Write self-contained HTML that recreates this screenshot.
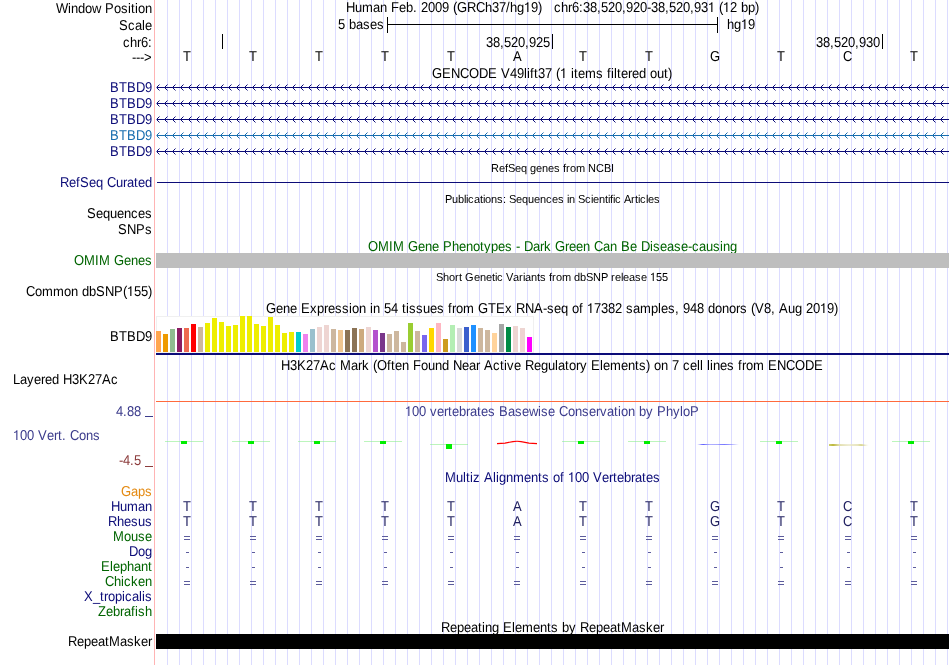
<!DOCTYPE html>
<html><head><meta charset="utf-8"><style>
html,body{margin:0;padding:0;background:#fff;width:950px;height:665px;overflow:hidden}
svg{display:block;will-change:transform}
text{font-family:"Liberation Sans", sans-serif;text-rendering:geometricPrecision;white-space:pre}
</style></head><body>
<svg width="950" height="665" viewBox="0 0 950 665" shape-rendering="crispEdges">
<rect x="167" y="0" width="1" height="665" fill="#dcdcff"/><rect x="179" y="0" width="1" height="665" fill="#dcdcff"/><rect x="191" y="0" width="1" height="665" fill="#dcdcff"/><rect x="203" y="0" width="1" height="665" fill="#dcdcff"/><rect x="215" y="0" width="1" height="665" fill="#dcdcff"/><rect x="227" y="0" width="1" height="665" fill="#dcdcff"/><rect x="239" y="0" width="1" height="665" fill="#dcdcff"/><rect x="251" y="0" width="1" height="665" fill="#dcdcff"/><rect x="263" y="0" width="1" height="665" fill="#dcdcff"/><rect x="275" y="0" width="1" height="665" fill="#dcdcff"/><rect x="287" y="0" width="1" height="665" fill="#dcdcff"/><rect x="299" y="0" width="1" height="665" fill="#dcdcff"/><rect x="311" y="0" width="1" height="665" fill="#dcdcff"/><rect x="323" y="0" width="1" height="665" fill="#dcdcff"/><rect x="335" y="0" width="1" height="665" fill="#dcdcff"/><rect x="347" y="0" width="1" height="665" fill="#dcdcff"/><rect x="359" y="0" width="1" height="665" fill="#dcdcff"/><rect x="371" y="0" width="1" height="665" fill="#dcdcff"/><rect x="383" y="0" width="1" height="665" fill="#dcdcff"/><rect x="395" y="0" width="1" height="665" fill="#dcdcff"/><rect x="407" y="0" width="1" height="665" fill="#dcdcff"/><rect x="419" y="0" width="1" height="665" fill="#dcdcff"/><rect x="431" y="0" width="1" height="665" fill="#dcdcff"/><rect x="443" y="0" width="1" height="665" fill="#dcdcff"/><rect x="455" y="0" width="1" height="665" fill="#dcdcff"/><rect x="467" y="0" width="1" height="665" fill="#dcdcff"/><rect x="479" y="0" width="1" height="665" fill="#dcdcff"/><rect x="491" y="0" width="1" height="665" fill="#dcdcff"/><rect x="503" y="0" width="1" height="665" fill="#dcdcff"/><rect x="515" y="0" width="1" height="665" fill="#dcdcff"/><rect x="527" y="0" width="1" height="665" fill="#dcdcff"/><rect x="539" y="0" width="1" height="665" fill="#dcdcff"/><rect x="551" y="0" width="1" height="665" fill="#dcdcff"/><rect x="563" y="0" width="1" height="665" fill="#dcdcff"/><rect x="575" y="0" width="1" height="665" fill="#dcdcff"/><rect x="587" y="0" width="1" height="665" fill="#dcdcff"/><rect x="599" y="0" width="1" height="665" fill="#dcdcff"/><rect x="611" y="0" width="1" height="665" fill="#dcdcff"/><rect x="623" y="0" width="1" height="665" fill="#dcdcff"/><rect x="635" y="0" width="1" height="665" fill="#dcdcff"/><rect x="647" y="0" width="1" height="665" fill="#dcdcff"/><rect x="659" y="0" width="1" height="665" fill="#dcdcff"/><rect x="671" y="0" width="1" height="665" fill="#dcdcff"/><rect x="683" y="0" width="1" height="665" fill="#dcdcff"/><rect x="695" y="0" width="1" height="665" fill="#dcdcff"/><rect x="707" y="0" width="1" height="665" fill="#dcdcff"/><rect x="719" y="0" width="1" height="665" fill="#dcdcff"/><rect x="731" y="0" width="1" height="665" fill="#dcdcff"/><rect x="743" y="0" width="1" height="665" fill="#dcdcff"/><rect x="755" y="0" width="1" height="665" fill="#dcdcff"/><rect x="767" y="0" width="1" height="665" fill="#dcdcff"/><rect x="779" y="0" width="1" height="665" fill="#dcdcff"/><rect x="791" y="0" width="1" height="665" fill="#dcdcff"/><rect x="803" y="0" width="1" height="665" fill="#dcdcff"/><rect x="815" y="0" width="1" height="665" fill="#dcdcff"/><rect x="827" y="0" width="1" height="665" fill="#dcdcff"/><rect x="839" y="0" width="1" height="665" fill="#dcdcff"/><rect x="851" y="0" width="1" height="665" fill="#dcdcff"/><rect x="863" y="0" width="1" height="665" fill="#dcdcff"/><rect x="875" y="0" width="1" height="665" fill="#dcdcff"/><rect x="887" y="0" width="1" height="665" fill="#dcdcff"/><rect x="899" y="0" width="1" height="665" fill="#dcdcff"/><rect x="911" y="0" width="1" height="665" fill="#dcdcff"/><rect x="923" y="0" width="1" height="665" fill="#dcdcff"/><rect x="935" y="0" width="1" height="665" fill="#dcdcff"/><rect x="947" y="0" width="1" height="665" fill="#dcdcff"/>
<rect x="154" y="0" width="1" height="665" fill="#ffb4b4"/>
<text transform="matrix(1,0,0,1.06,0,13)" x="56 68 71 78 85 92 101 105 114 121 128 131 135 138 145" y="0" font-size="13" fill="#000" > indow  osition</text>
<text transform="matrix(1,0,0,1.1,0,13)" x="56 68 71 78 85 92 101 105 114 121 128 131 135 138 145" y="0" font-size="13" fill="#000" >W      P       </text>
<text transform="matrix(1,0,0,1.06,0,30)" x="119 128 135 142 145" y="0" font-size="13" fill="#000" > cale</text>
<text transform="matrix(1,0,0,1.1,0,30)" x="119 128 135 142 145" y="0" font-size="13" fill="#000" >S    </text>
<text transform="matrix(1,0,0,1.06,0,47)" x="123 130 137 141 148" y="0" font-size="13" fill="#000" >chr  </text>
<text transform="matrix(1,0,0,1.1,0,47)" x="123 130 137 141 148" y="0" font-size="13" fill="#000" >   6:</text>
<text transform="matrix(1,0,0,1.1,0,62)" x="132 136 140 144" y="0" font-size="13" fill="#000" >---&gt;</text>
<text transform="matrix(1,0,0,1.06,0,12)" x="346 355 362 373 380 387 391 399 406 413 417 421 428 435 442 449 453 457 467 476 485 492 499 506 510 517 524 531 538" y="0" font-size="13" fill="#000" > uman  eb           h   hg   </text>
<text transform="matrix(1,0,0,1.1,0,12)" x="346 355 362 373 380 387 391 399 406 413 417 421 428 435 442 449 453 457 467 476 485 492 499 506 510 517 524 531 538" y="0" font-size="13" fill="#000" >H     F  . 2009 (GRC 37/   9)</text>
<path transform="matrix(0.006348,0,0,-0.006982,524,12)" d="M515,0L696,0L696,1409L566,1409Q470,1200 190,1130L190,1000Q400,1040 515,1150Z" fill="#000" shape-rendering="geometricPrecision"/>
<text transform="matrix(1,0,0,1.06,0,12)" x="554 561 568 572 579 583 590 597 601 608 615 622 626 633 640 647 651 658 665 669 676 683 690 694 701 708 715 719 723 730 737 741 748 755" y="0" font-size="13" fill="#000" >chr                            bp </text>
<text transform="matrix(1,0,0,1.1,0,12)" x="554 561 568 572 579 583 590 597 601 608 615 622 626 633 640 647 651 658 665 669 676 683 690 694 701 708 715 719 723 730 737 741 748 755" y="0" font-size="13" fill="#000" >   6:38,520,920-38,520,93  ( 2   )</text>
<path transform="matrix(0.006348,0,0,-0.006982,708,12)" d="M515,0L696,0L696,1409L566,1409Q470,1200 190,1130L190,1000Q400,1040 515,1150Z" fill="#000" shape-rendering="geometricPrecision"/>
<path transform="matrix(0.006348,0,0,-0.006982,723,12)" d="M515,0L696,0L696,1409L566,1409Q470,1200 190,1130L190,1000Q400,1040 515,1150Z" fill="#000" shape-rendering="geometricPrecision"/>
<text transform="matrix(1,0,0,1.06,0,29)" x="338 345 349 356 363 370 377" y="0" font-size="13" fill="#000" >  bases</text>
<text transform="matrix(1,0,0,1.1,0,29)" x="338 345 349 356 363 370 377" y="0" font-size="13" fill="#000" >5      </text>
<text transform="matrix(1,0,0,1.06,0,29)" x="727 734 741 748" y="0" font-size="13" fill="#000" >hg  </text>
<text transform="matrix(1,0,0,1.1,0,29)" x="727 734 741 748" y="0" font-size="13" fill="#000" >   9</text>
<path transform="matrix(0.006348,0,0,-0.006982,741,29)" d="M515,0L696,0L696,1409L566,1409Q470,1200 190,1130L190,1000Q400,1040 515,1150Z" fill="#000" shape-rendering="geometricPrecision"/>
<rect x="387" y="17" width="1" height="16" fill="#000"/>
<rect x="717" y="17" width="1" height="16" fill="#000"/>
<rect x="387" y="24" width="331" height="1" fill="#000"/>
<rect x="222" y="34" width="1" height="15" fill="#000"/>
<rect x="552" y="34" width="1" height="15" fill="#000"/>
<rect x="882" y="34" width="1" height="15" fill="#000"/>
<text transform="matrix(1,0,0,1.1,0,47)" x="486 493 500 504 511 518 525 529 536 543" y="0" font-size="13" fill="#000" >38,520,925</text>
<text transform="matrix(1,0,0,1.1,0,47)" x="816 823 830 834 841 848 855 859 866 873" y="0" font-size="13" fill="#000" >38,520,930</text>
<text transform="matrix(1,0,0,1.1,0,61)" x="183" y="0" font-size="13" fill="#000" >T</text>
<text transform="matrix(1,0,0,1.1,0,61)" x="249" y="0" font-size="13" fill="#000" >T</text>
<text transform="matrix(1,0,0,1.1,0,61)" x="315" y="0" font-size="13" fill="#000" >T</text>
<text transform="matrix(1,0,0,1.1,0,61)" x="381" y="0" font-size="13" fill="#000" >T</text>
<text transform="matrix(1,0,0,1.1,0,61)" x="447" y="0" font-size="13" fill="#000" >T</text>
<text transform="matrix(1,0,0,1.1,0,61)" x="513" y="0" font-size="13" fill="#000" >A</text>
<text transform="matrix(1,0,0,1.1,0,61)" x="579" y="0" font-size="13" fill="#000" >T</text>
<text transform="matrix(1,0,0,1.1,0,61)" x="645" y="0" font-size="13" fill="#000" >T</text>
<text transform="matrix(1,0,0,1.1,0,61)" x="710" y="0" font-size="13" fill="#000" >G</text>
<text transform="matrix(1,0,0,1.1,0,61)" x="777" y="0" font-size="13" fill="#000" >T</text>
<text transform="matrix(1,0,0,1.1,0,61)" x="843" y="0" font-size="13" fill="#000" >C</text>
<text transform="matrix(1,0,0,1.1,0,61)" x="910" y="0" font-size="13" fill="#000" >T</text>
<text transform="matrix(1,0,0,1.06,0,78)" x="432 442 451 460 469 479 488 497 501 510 517 524 527 530 534 538 545 552 556 560 567 571 574 578 585 596 603 607 611 614 617 621 628 632 639 646 650 657 664 668" y="0" font-size="13" fill="#000" >           lift      items filtered out </text>
<text transform="matrix(1,0,0,1.1,0,78)" x="432 442 451 460 469 479 488 497 501 510 517 524 527 530 534 538 545 552 556 560 567 571 574 578 585 596 603 607 611 614 617 621 628 632 639 646 650 657 664 668" y="0" font-size="13" fill="#000" >GENCODE V49    37 (                    )</text>
<path transform="matrix(0.006348,0,0,-0.006982,560,78)" d="M515,0L696,0L696,1409L566,1409Q470,1200 190,1130L190,1000Q400,1040 515,1150Z" fill="#000" shape-rendering="geometricPrecision"/>
<text transform="matrix(1,0,0,1.1,0,92)" x="110 119 127 136 145" y="0" font-size="13" fill="#0c0c78" >BTBD9</text>
<rect x="157" y="87" width="792" height="1" fill="#0c0c78"/>
<path d="M157,86h1v3h-1zM158,85h1v1h-1zM158,89h1v1h-1zM165,86h1v3h-1zM166,85h1v1h-1zM166,89h1v1h-1zM173,86h1v3h-1zM174,85h1v1h-1zM174,89h1v1h-1zM181,86h1v3h-1zM182,85h1v1h-1zM182,89h1v1h-1zM189,86h1v3h-1zM190,85h1v1h-1zM190,89h1v1h-1zM197,86h1v3h-1zM198,85h1v1h-1zM198,89h1v1h-1zM205,86h1v3h-1zM206,85h1v1h-1zM206,89h1v1h-1zM213,86h1v3h-1zM214,85h1v1h-1zM214,89h1v1h-1zM221,86h1v3h-1zM222,85h1v1h-1zM222,89h1v1h-1zM229,86h1v3h-1zM230,85h1v1h-1zM230,89h1v1h-1zM237,86h1v3h-1zM238,85h1v1h-1zM238,89h1v1h-1zM245,86h1v3h-1zM246,85h1v1h-1zM246,89h1v1h-1zM253,86h1v3h-1zM254,85h1v1h-1zM254,89h1v1h-1zM261,86h1v3h-1zM262,85h1v1h-1zM262,89h1v1h-1zM269,86h1v3h-1zM270,85h1v1h-1zM270,89h1v1h-1zM277,86h1v3h-1zM278,85h1v1h-1zM278,89h1v1h-1zM285,86h1v3h-1zM286,85h1v1h-1zM286,89h1v1h-1zM293,86h1v3h-1zM294,85h1v1h-1zM294,89h1v1h-1zM301,86h1v3h-1zM302,85h1v1h-1zM302,89h1v1h-1zM309,86h1v3h-1zM310,85h1v1h-1zM310,89h1v1h-1zM317,86h1v3h-1zM318,85h1v1h-1zM318,89h1v1h-1zM325,86h1v3h-1zM326,85h1v1h-1zM326,89h1v1h-1zM333,86h1v3h-1zM334,85h1v1h-1zM334,89h1v1h-1zM341,86h1v3h-1zM342,85h1v1h-1zM342,89h1v1h-1zM349,86h1v3h-1zM350,85h1v1h-1zM350,89h1v1h-1zM357,86h1v3h-1zM358,85h1v1h-1zM358,89h1v1h-1zM365,86h1v3h-1zM366,85h1v1h-1zM366,89h1v1h-1zM373,86h1v3h-1zM374,85h1v1h-1zM374,89h1v1h-1zM381,86h1v3h-1zM382,85h1v1h-1zM382,89h1v1h-1zM389,86h1v3h-1zM390,85h1v1h-1zM390,89h1v1h-1zM397,86h1v3h-1zM398,85h1v1h-1zM398,89h1v1h-1zM405,86h1v3h-1zM406,85h1v1h-1zM406,89h1v1h-1zM413,86h1v3h-1zM414,85h1v1h-1zM414,89h1v1h-1zM421,86h1v3h-1zM422,85h1v1h-1zM422,89h1v1h-1zM429,86h1v3h-1zM430,85h1v1h-1zM430,89h1v1h-1zM437,86h1v3h-1zM438,85h1v1h-1zM438,89h1v1h-1zM445,86h1v3h-1zM446,85h1v1h-1zM446,89h1v1h-1zM453,86h1v3h-1zM454,85h1v1h-1zM454,89h1v1h-1zM461,86h1v3h-1zM462,85h1v1h-1zM462,89h1v1h-1zM469,86h1v3h-1zM470,85h1v1h-1zM470,89h1v1h-1zM477,86h1v3h-1zM478,85h1v1h-1zM478,89h1v1h-1zM485,86h1v3h-1zM486,85h1v1h-1zM486,89h1v1h-1zM493,86h1v3h-1zM494,85h1v1h-1zM494,89h1v1h-1zM501,86h1v3h-1zM502,85h1v1h-1zM502,89h1v1h-1zM509,86h1v3h-1zM510,85h1v1h-1zM510,89h1v1h-1zM517,86h1v3h-1zM518,85h1v1h-1zM518,89h1v1h-1zM525,86h1v3h-1zM526,85h1v1h-1zM526,89h1v1h-1zM533,86h1v3h-1zM534,85h1v1h-1zM534,89h1v1h-1zM541,86h1v3h-1zM542,85h1v1h-1zM542,89h1v1h-1zM549,86h1v3h-1zM550,85h1v1h-1zM550,89h1v1h-1zM557,86h1v3h-1zM558,85h1v1h-1zM558,89h1v1h-1zM565,86h1v3h-1zM566,85h1v1h-1zM566,89h1v1h-1zM573,86h1v3h-1zM574,85h1v1h-1zM574,89h1v1h-1zM581,86h1v3h-1zM582,85h1v1h-1zM582,89h1v1h-1zM589,86h1v3h-1zM590,85h1v1h-1zM590,89h1v1h-1zM597,86h1v3h-1zM598,85h1v1h-1zM598,89h1v1h-1zM605,86h1v3h-1zM606,85h1v1h-1zM606,89h1v1h-1zM613,86h1v3h-1zM614,85h1v1h-1zM614,89h1v1h-1zM621,86h1v3h-1zM622,85h1v1h-1zM622,89h1v1h-1zM629,86h1v3h-1zM630,85h1v1h-1zM630,89h1v1h-1zM637,86h1v3h-1zM638,85h1v1h-1zM638,89h1v1h-1zM645,86h1v3h-1zM646,85h1v1h-1zM646,89h1v1h-1zM653,86h1v3h-1zM654,85h1v1h-1zM654,89h1v1h-1zM661,86h1v3h-1zM662,85h1v1h-1zM662,89h1v1h-1zM669,86h1v3h-1zM670,85h1v1h-1zM670,89h1v1h-1zM677,86h1v3h-1zM678,85h1v1h-1zM678,89h1v1h-1zM685,86h1v3h-1zM686,85h1v1h-1zM686,89h1v1h-1zM693,86h1v3h-1zM694,85h1v1h-1zM694,89h1v1h-1zM701,86h1v3h-1zM702,85h1v1h-1zM702,89h1v1h-1zM709,86h1v3h-1zM710,85h1v1h-1zM710,89h1v1h-1zM717,86h1v3h-1zM718,85h1v1h-1zM718,89h1v1h-1zM725,86h1v3h-1zM726,85h1v1h-1zM726,89h1v1h-1zM733,86h1v3h-1zM734,85h1v1h-1zM734,89h1v1h-1zM741,86h1v3h-1zM742,85h1v1h-1zM742,89h1v1h-1zM749,86h1v3h-1zM750,85h1v1h-1zM750,89h1v1h-1zM757,86h1v3h-1zM758,85h1v1h-1zM758,89h1v1h-1zM765,86h1v3h-1zM766,85h1v1h-1zM766,89h1v1h-1zM773,86h1v3h-1zM774,85h1v1h-1zM774,89h1v1h-1zM781,86h1v3h-1zM782,85h1v1h-1zM782,89h1v1h-1zM789,86h1v3h-1zM790,85h1v1h-1zM790,89h1v1h-1zM797,86h1v3h-1zM798,85h1v1h-1zM798,89h1v1h-1zM805,86h1v3h-1zM806,85h1v1h-1zM806,89h1v1h-1zM813,86h1v3h-1zM814,85h1v1h-1zM814,89h1v1h-1zM821,86h1v3h-1zM822,85h1v1h-1zM822,89h1v1h-1zM829,86h1v3h-1zM830,85h1v1h-1zM830,89h1v1h-1zM837,86h1v3h-1zM838,85h1v1h-1zM838,89h1v1h-1zM845,86h1v3h-1zM846,85h1v1h-1zM846,89h1v1h-1zM853,86h1v3h-1zM854,85h1v1h-1zM854,89h1v1h-1zM861,86h1v3h-1zM862,85h1v1h-1zM862,89h1v1h-1zM869,86h1v3h-1zM870,85h1v1h-1zM870,89h1v1h-1zM877,86h1v3h-1zM878,85h1v1h-1zM878,89h1v1h-1zM885,86h1v3h-1zM886,85h1v1h-1zM886,89h1v1h-1zM893,86h1v3h-1zM894,85h1v1h-1zM894,89h1v1h-1zM901,86h1v3h-1zM902,85h1v1h-1zM902,89h1v1h-1zM909,86h1v3h-1zM910,85h1v1h-1zM910,89h1v1h-1zM917,86h1v3h-1zM918,85h1v1h-1zM918,89h1v1h-1zM925,86h1v3h-1zM926,85h1v1h-1zM926,89h1v1h-1zM933,86h1v3h-1zM934,85h1v1h-1zM934,89h1v1h-1zM941,86h1v3h-1zM942,85h1v1h-1zM942,89h1v1h-1z" fill="#0c0c78"/>
<path d="M156,87h1v1h-1zM159,84h1v1h-1zM159,90h1v1h-1zM164,87h1v1h-1zM167,84h1v1h-1zM167,90h1v1h-1zM172,87h1v1h-1zM175,84h1v1h-1zM175,90h1v1h-1zM180,87h1v1h-1zM183,84h1v1h-1zM183,90h1v1h-1zM188,87h1v1h-1zM191,84h1v1h-1zM191,90h1v1h-1zM196,87h1v1h-1zM199,84h1v1h-1zM199,90h1v1h-1zM204,87h1v1h-1zM207,84h1v1h-1zM207,90h1v1h-1zM212,87h1v1h-1zM215,84h1v1h-1zM215,90h1v1h-1zM220,87h1v1h-1zM223,84h1v1h-1zM223,90h1v1h-1zM228,87h1v1h-1zM231,84h1v1h-1zM231,90h1v1h-1zM236,87h1v1h-1zM239,84h1v1h-1zM239,90h1v1h-1zM244,87h1v1h-1zM247,84h1v1h-1zM247,90h1v1h-1zM252,87h1v1h-1zM255,84h1v1h-1zM255,90h1v1h-1zM260,87h1v1h-1zM263,84h1v1h-1zM263,90h1v1h-1zM268,87h1v1h-1zM271,84h1v1h-1zM271,90h1v1h-1zM276,87h1v1h-1zM279,84h1v1h-1zM279,90h1v1h-1zM284,87h1v1h-1zM287,84h1v1h-1zM287,90h1v1h-1zM292,87h1v1h-1zM295,84h1v1h-1zM295,90h1v1h-1zM300,87h1v1h-1zM303,84h1v1h-1zM303,90h1v1h-1zM308,87h1v1h-1zM311,84h1v1h-1zM311,90h1v1h-1zM316,87h1v1h-1zM319,84h1v1h-1zM319,90h1v1h-1zM324,87h1v1h-1zM327,84h1v1h-1zM327,90h1v1h-1zM332,87h1v1h-1zM335,84h1v1h-1zM335,90h1v1h-1zM340,87h1v1h-1zM343,84h1v1h-1zM343,90h1v1h-1zM348,87h1v1h-1zM351,84h1v1h-1zM351,90h1v1h-1zM356,87h1v1h-1zM359,84h1v1h-1zM359,90h1v1h-1zM364,87h1v1h-1zM367,84h1v1h-1zM367,90h1v1h-1zM372,87h1v1h-1zM375,84h1v1h-1zM375,90h1v1h-1zM380,87h1v1h-1zM383,84h1v1h-1zM383,90h1v1h-1zM388,87h1v1h-1zM391,84h1v1h-1zM391,90h1v1h-1zM396,87h1v1h-1zM399,84h1v1h-1zM399,90h1v1h-1zM404,87h1v1h-1zM407,84h1v1h-1zM407,90h1v1h-1zM412,87h1v1h-1zM415,84h1v1h-1zM415,90h1v1h-1zM420,87h1v1h-1zM423,84h1v1h-1zM423,90h1v1h-1zM428,87h1v1h-1zM431,84h1v1h-1zM431,90h1v1h-1zM436,87h1v1h-1zM439,84h1v1h-1zM439,90h1v1h-1zM444,87h1v1h-1zM447,84h1v1h-1zM447,90h1v1h-1zM452,87h1v1h-1zM455,84h1v1h-1zM455,90h1v1h-1zM460,87h1v1h-1zM463,84h1v1h-1zM463,90h1v1h-1zM468,87h1v1h-1zM471,84h1v1h-1zM471,90h1v1h-1zM476,87h1v1h-1zM479,84h1v1h-1zM479,90h1v1h-1zM484,87h1v1h-1zM487,84h1v1h-1zM487,90h1v1h-1zM492,87h1v1h-1zM495,84h1v1h-1zM495,90h1v1h-1zM500,87h1v1h-1zM503,84h1v1h-1zM503,90h1v1h-1zM508,87h1v1h-1zM511,84h1v1h-1zM511,90h1v1h-1zM516,87h1v1h-1zM519,84h1v1h-1zM519,90h1v1h-1zM524,87h1v1h-1zM527,84h1v1h-1zM527,90h1v1h-1zM532,87h1v1h-1zM535,84h1v1h-1zM535,90h1v1h-1zM540,87h1v1h-1zM543,84h1v1h-1zM543,90h1v1h-1zM548,87h1v1h-1zM551,84h1v1h-1zM551,90h1v1h-1zM556,87h1v1h-1zM559,84h1v1h-1zM559,90h1v1h-1zM564,87h1v1h-1zM567,84h1v1h-1zM567,90h1v1h-1zM572,87h1v1h-1zM575,84h1v1h-1zM575,90h1v1h-1zM580,87h1v1h-1zM583,84h1v1h-1zM583,90h1v1h-1zM588,87h1v1h-1zM591,84h1v1h-1zM591,90h1v1h-1zM596,87h1v1h-1zM599,84h1v1h-1zM599,90h1v1h-1zM604,87h1v1h-1zM607,84h1v1h-1zM607,90h1v1h-1zM612,87h1v1h-1zM615,84h1v1h-1zM615,90h1v1h-1zM620,87h1v1h-1zM623,84h1v1h-1zM623,90h1v1h-1zM628,87h1v1h-1zM631,84h1v1h-1zM631,90h1v1h-1zM636,87h1v1h-1zM639,84h1v1h-1zM639,90h1v1h-1zM644,87h1v1h-1zM647,84h1v1h-1zM647,90h1v1h-1zM652,87h1v1h-1zM655,84h1v1h-1zM655,90h1v1h-1zM660,87h1v1h-1zM663,84h1v1h-1zM663,90h1v1h-1zM668,87h1v1h-1zM671,84h1v1h-1zM671,90h1v1h-1zM676,87h1v1h-1zM679,84h1v1h-1zM679,90h1v1h-1zM684,87h1v1h-1zM687,84h1v1h-1zM687,90h1v1h-1zM692,87h1v1h-1zM695,84h1v1h-1zM695,90h1v1h-1zM700,87h1v1h-1zM703,84h1v1h-1zM703,90h1v1h-1zM708,87h1v1h-1zM711,84h1v1h-1zM711,90h1v1h-1zM716,87h1v1h-1zM719,84h1v1h-1zM719,90h1v1h-1zM724,87h1v1h-1zM727,84h1v1h-1zM727,90h1v1h-1zM732,87h1v1h-1zM735,84h1v1h-1zM735,90h1v1h-1zM740,87h1v1h-1zM743,84h1v1h-1zM743,90h1v1h-1zM748,87h1v1h-1zM751,84h1v1h-1zM751,90h1v1h-1zM756,87h1v1h-1zM759,84h1v1h-1zM759,90h1v1h-1zM764,87h1v1h-1zM767,84h1v1h-1zM767,90h1v1h-1zM772,87h1v1h-1zM775,84h1v1h-1zM775,90h1v1h-1zM780,87h1v1h-1zM783,84h1v1h-1zM783,90h1v1h-1zM788,87h1v1h-1zM791,84h1v1h-1zM791,90h1v1h-1zM796,87h1v1h-1zM799,84h1v1h-1zM799,90h1v1h-1zM804,87h1v1h-1zM807,84h1v1h-1zM807,90h1v1h-1zM812,87h1v1h-1zM815,84h1v1h-1zM815,90h1v1h-1zM820,87h1v1h-1zM823,84h1v1h-1zM823,90h1v1h-1zM828,87h1v1h-1zM831,84h1v1h-1zM831,90h1v1h-1zM836,87h1v1h-1zM839,84h1v1h-1zM839,90h1v1h-1zM844,87h1v1h-1zM847,84h1v1h-1zM847,90h1v1h-1zM852,87h1v1h-1zM855,84h1v1h-1zM855,90h1v1h-1zM860,87h1v1h-1zM863,84h1v1h-1zM863,90h1v1h-1zM868,87h1v1h-1zM871,84h1v1h-1zM871,90h1v1h-1zM876,87h1v1h-1zM879,84h1v1h-1zM879,90h1v1h-1zM884,87h1v1h-1zM887,84h1v1h-1zM887,90h1v1h-1zM892,87h1v1h-1zM895,84h1v1h-1zM895,90h1v1h-1zM900,87h1v1h-1zM903,84h1v1h-1zM903,90h1v1h-1zM908,87h1v1h-1zM911,84h1v1h-1zM911,90h1v1h-1zM916,87h1v1h-1zM919,84h1v1h-1zM919,90h1v1h-1zM924,87h1v1h-1zM927,84h1v1h-1zM927,90h1v1h-1zM932,87h1v1h-1zM935,84h1v1h-1zM935,90h1v1h-1zM940,87h1v1h-1zM943,84h1v1h-1zM943,90h1v1h-1z" fill="#0c0c78" fill-opacity="0.5"/>
<text transform="matrix(1,0,0,1.1,0,108)" x="110 119 127 136 145" y="0" font-size="13" fill="#0c0c78" >BTBD9</text>
<rect x="157" y="103" width="792" height="1" fill="#0c0c78"/>
<path d="M157,102h1v3h-1zM158,101h1v1h-1zM158,105h1v1h-1zM165,102h1v3h-1zM166,101h1v1h-1zM166,105h1v1h-1zM173,102h1v3h-1zM174,101h1v1h-1zM174,105h1v1h-1zM181,102h1v3h-1zM182,101h1v1h-1zM182,105h1v1h-1zM189,102h1v3h-1zM190,101h1v1h-1zM190,105h1v1h-1zM197,102h1v3h-1zM198,101h1v1h-1zM198,105h1v1h-1zM205,102h1v3h-1zM206,101h1v1h-1zM206,105h1v1h-1zM213,102h1v3h-1zM214,101h1v1h-1zM214,105h1v1h-1zM221,102h1v3h-1zM222,101h1v1h-1zM222,105h1v1h-1zM229,102h1v3h-1zM230,101h1v1h-1zM230,105h1v1h-1zM237,102h1v3h-1zM238,101h1v1h-1zM238,105h1v1h-1zM245,102h1v3h-1zM246,101h1v1h-1zM246,105h1v1h-1zM253,102h1v3h-1zM254,101h1v1h-1zM254,105h1v1h-1zM261,102h1v3h-1zM262,101h1v1h-1zM262,105h1v1h-1zM269,102h1v3h-1zM270,101h1v1h-1zM270,105h1v1h-1zM277,102h1v3h-1zM278,101h1v1h-1zM278,105h1v1h-1zM285,102h1v3h-1zM286,101h1v1h-1zM286,105h1v1h-1zM293,102h1v3h-1zM294,101h1v1h-1zM294,105h1v1h-1zM301,102h1v3h-1zM302,101h1v1h-1zM302,105h1v1h-1zM309,102h1v3h-1zM310,101h1v1h-1zM310,105h1v1h-1zM317,102h1v3h-1zM318,101h1v1h-1zM318,105h1v1h-1zM325,102h1v3h-1zM326,101h1v1h-1zM326,105h1v1h-1zM333,102h1v3h-1zM334,101h1v1h-1zM334,105h1v1h-1zM341,102h1v3h-1zM342,101h1v1h-1zM342,105h1v1h-1zM349,102h1v3h-1zM350,101h1v1h-1zM350,105h1v1h-1zM357,102h1v3h-1zM358,101h1v1h-1zM358,105h1v1h-1zM365,102h1v3h-1zM366,101h1v1h-1zM366,105h1v1h-1zM373,102h1v3h-1zM374,101h1v1h-1zM374,105h1v1h-1zM381,102h1v3h-1zM382,101h1v1h-1zM382,105h1v1h-1zM389,102h1v3h-1zM390,101h1v1h-1zM390,105h1v1h-1zM397,102h1v3h-1zM398,101h1v1h-1zM398,105h1v1h-1zM405,102h1v3h-1zM406,101h1v1h-1zM406,105h1v1h-1zM413,102h1v3h-1zM414,101h1v1h-1zM414,105h1v1h-1zM421,102h1v3h-1zM422,101h1v1h-1zM422,105h1v1h-1zM429,102h1v3h-1zM430,101h1v1h-1zM430,105h1v1h-1zM437,102h1v3h-1zM438,101h1v1h-1zM438,105h1v1h-1zM445,102h1v3h-1zM446,101h1v1h-1zM446,105h1v1h-1zM453,102h1v3h-1zM454,101h1v1h-1zM454,105h1v1h-1zM461,102h1v3h-1zM462,101h1v1h-1zM462,105h1v1h-1zM469,102h1v3h-1zM470,101h1v1h-1zM470,105h1v1h-1zM477,102h1v3h-1zM478,101h1v1h-1zM478,105h1v1h-1zM485,102h1v3h-1zM486,101h1v1h-1zM486,105h1v1h-1zM493,102h1v3h-1zM494,101h1v1h-1zM494,105h1v1h-1zM501,102h1v3h-1zM502,101h1v1h-1zM502,105h1v1h-1zM509,102h1v3h-1zM510,101h1v1h-1zM510,105h1v1h-1zM517,102h1v3h-1zM518,101h1v1h-1zM518,105h1v1h-1zM525,102h1v3h-1zM526,101h1v1h-1zM526,105h1v1h-1zM533,102h1v3h-1zM534,101h1v1h-1zM534,105h1v1h-1zM541,102h1v3h-1zM542,101h1v1h-1zM542,105h1v1h-1zM549,102h1v3h-1zM550,101h1v1h-1zM550,105h1v1h-1zM557,102h1v3h-1zM558,101h1v1h-1zM558,105h1v1h-1zM565,102h1v3h-1zM566,101h1v1h-1zM566,105h1v1h-1zM573,102h1v3h-1zM574,101h1v1h-1zM574,105h1v1h-1zM581,102h1v3h-1zM582,101h1v1h-1zM582,105h1v1h-1zM589,102h1v3h-1zM590,101h1v1h-1zM590,105h1v1h-1zM597,102h1v3h-1zM598,101h1v1h-1zM598,105h1v1h-1zM605,102h1v3h-1zM606,101h1v1h-1zM606,105h1v1h-1zM613,102h1v3h-1zM614,101h1v1h-1zM614,105h1v1h-1zM621,102h1v3h-1zM622,101h1v1h-1zM622,105h1v1h-1zM629,102h1v3h-1zM630,101h1v1h-1zM630,105h1v1h-1zM637,102h1v3h-1zM638,101h1v1h-1zM638,105h1v1h-1zM645,102h1v3h-1zM646,101h1v1h-1zM646,105h1v1h-1zM653,102h1v3h-1zM654,101h1v1h-1zM654,105h1v1h-1zM661,102h1v3h-1zM662,101h1v1h-1zM662,105h1v1h-1zM669,102h1v3h-1zM670,101h1v1h-1zM670,105h1v1h-1zM677,102h1v3h-1zM678,101h1v1h-1zM678,105h1v1h-1zM685,102h1v3h-1zM686,101h1v1h-1zM686,105h1v1h-1zM693,102h1v3h-1zM694,101h1v1h-1zM694,105h1v1h-1zM701,102h1v3h-1zM702,101h1v1h-1zM702,105h1v1h-1zM709,102h1v3h-1zM710,101h1v1h-1zM710,105h1v1h-1zM717,102h1v3h-1zM718,101h1v1h-1zM718,105h1v1h-1zM725,102h1v3h-1zM726,101h1v1h-1zM726,105h1v1h-1zM733,102h1v3h-1zM734,101h1v1h-1zM734,105h1v1h-1zM741,102h1v3h-1zM742,101h1v1h-1zM742,105h1v1h-1zM749,102h1v3h-1zM750,101h1v1h-1zM750,105h1v1h-1zM757,102h1v3h-1zM758,101h1v1h-1zM758,105h1v1h-1zM765,102h1v3h-1zM766,101h1v1h-1zM766,105h1v1h-1zM773,102h1v3h-1zM774,101h1v1h-1zM774,105h1v1h-1zM781,102h1v3h-1zM782,101h1v1h-1zM782,105h1v1h-1zM789,102h1v3h-1zM790,101h1v1h-1zM790,105h1v1h-1zM797,102h1v3h-1zM798,101h1v1h-1zM798,105h1v1h-1zM805,102h1v3h-1zM806,101h1v1h-1zM806,105h1v1h-1zM813,102h1v3h-1zM814,101h1v1h-1zM814,105h1v1h-1zM821,102h1v3h-1zM822,101h1v1h-1zM822,105h1v1h-1zM829,102h1v3h-1zM830,101h1v1h-1zM830,105h1v1h-1zM837,102h1v3h-1zM838,101h1v1h-1zM838,105h1v1h-1zM845,102h1v3h-1zM846,101h1v1h-1zM846,105h1v1h-1zM853,102h1v3h-1zM854,101h1v1h-1zM854,105h1v1h-1zM861,102h1v3h-1zM862,101h1v1h-1zM862,105h1v1h-1zM869,102h1v3h-1zM870,101h1v1h-1zM870,105h1v1h-1zM877,102h1v3h-1zM878,101h1v1h-1zM878,105h1v1h-1zM885,102h1v3h-1zM886,101h1v1h-1zM886,105h1v1h-1zM893,102h1v3h-1zM894,101h1v1h-1zM894,105h1v1h-1zM901,102h1v3h-1zM902,101h1v1h-1zM902,105h1v1h-1zM909,102h1v3h-1zM910,101h1v1h-1zM910,105h1v1h-1zM917,102h1v3h-1zM918,101h1v1h-1zM918,105h1v1h-1zM925,102h1v3h-1zM926,101h1v1h-1zM926,105h1v1h-1zM933,102h1v3h-1zM934,101h1v1h-1zM934,105h1v1h-1zM941,102h1v3h-1zM942,101h1v1h-1zM942,105h1v1h-1z" fill="#0c0c78"/>
<path d="M156,103h1v1h-1zM159,100h1v1h-1zM159,106h1v1h-1zM164,103h1v1h-1zM167,100h1v1h-1zM167,106h1v1h-1zM172,103h1v1h-1zM175,100h1v1h-1zM175,106h1v1h-1zM180,103h1v1h-1zM183,100h1v1h-1zM183,106h1v1h-1zM188,103h1v1h-1zM191,100h1v1h-1zM191,106h1v1h-1zM196,103h1v1h-1zM199,100h1v1h-1zM199,106h1v1h-1zM204,103h1v1h-1zM207,100h1v1h-1zM207,106h1v1h-1zM212,103h1v1h-1zM215,100h1v1h-1zM215,106h1v1h-1zM220,103h1v1h-1zM223,100h1v1h-1zM223,106h1v1h-1zM228,103h1v1h-1zM231,100h1v1h-1zM231,106h1v1h-1zM236,103h1v1h-1zM239,100h1v1h-1zM239,106h1v1h-1zM244,103h1v1h-1zM247,100h1v1h-1zM247,106h1v1h-1zM252,103h1v1h-1zM255,100h1v1h-1zM255,106h1v1h-1zM260,103h1v1h-1zM263,100h1v1h-1zM263,106h1v1h-1zM268,103h1v1h-1zM271,100h1v1h-1zM271,106h1v1h-1zM276,103h1v1h-1zM279,100h1v1h-1zM279,106h1v1h-1zM284,103h1v1h-1zM287,100h1v1h-1zM287,106h1v1h-1zM292,103h1v1h-1zM295,100h1v1h-1zM295,106h1v1h-1zM300,103h1v1h-1zM303,100h1v1h-1zM303,106h1v1h-1zM308,103h1v1h-1zM311,100h1v1h-1zM311,106h1v1h-1zM316,103h1v1h-1zM319,100h1v1h-1zM319,106h1v1h-1zM324,103h1v1h-1zM327,100h1v1h-1zM327,106h1v1h-1zM332,103h1v1h-1zM335,100h1v1h-1zM335,106h1v1h-1zM340,103h1v1h-1zM343,100h1v1h-1zM343,106h1v1h-1zM348,103h1v1h-1zM351,100h1v1h-1zM351,106h1v1h-1zM356,103h1v1h-1zM359,100h1v1h-1zM359,106h1v1h-1zM364,103h1v1h-1zM367,100h1v1h-1zM367,106h1v1h-1zM372,103h1v1h-1zM375,100h1v1h-1zM375,106h1v1h-1zM380,103h1v1h-1zM383,100h1v1h-1zM383,106h1v1h-1zM388,103h1v1h-1zM391,100h1v1h-1zM391,106h1v1h-1zM396,103h1v1h-1zM399,100h1v1h-1zM399,106h1v1h-1zM404,103h1v1h-1zM407,100h1v1h-1zM407,106h1v1h-1zM412,103h1v1h-1zM415,100h1v1h-1zM415,106h1v1h-1zM420,103h1v1h-1zM423,100h1v1h-1zM423,106h1v1h-1zM428,103h1v1h-1zM431,100h1v1h-1zM431,106h1v1h-1zM436,103h1v1h-1zM439,100h1v1h-1zM439,106h1v1h-1zM444,103h1v1h-1zM447,100h1v1h-1zM447,106h1v1h-1zM452,103h1v1h-1zM455,100h1v1h-1zM455,106h1v1h-1zM460,103h1v1h-1zM463,100h1v1h-1zM463,106h1v1h-1zM468,103h1v1h-1zM471,100h1v1h-1zM471,106h1v1h-1zM476,103h1v1h-1zM479,100h1v1h-1zM479,106h1v1h-1zM484,103h1v1h-1zM487,100h1v1h-1zM487,106h1v1h-1zM492,103h1v1h-1zM495,100h1v1h-1zM495,106h1v1h-1zM500,103h1v1h-1zM503,100h1v1h-1zM503,106h1v1h-1zM508,103h1v1h-1zM511,100h1v1h-1zM511,106h1v1h-1zM516,103h1v1h-1zM519,100h1v1h-1zM519,106h1v1h-1zM524,103h1v1h-1zM527,100h1v1h-1zM527,106h1v1h-1zM532,103h1v1h-1zM535,100h1v1h-1zM535,106h1v1h-1zM540,103h1v1h-1zM543,100h1v1h-1zM543,106h1v1h-1zM548,103h1v1h-1zM551,100h1v1h-1zM551,106h1v1h-1zM556,103h1v1h-1zM559,100h1v1h-1zM559,106h1v1h-1zM564,103h1v1h-1zM567,100h1v1h-1zM567,106h1v1h-1zM572,103h1v1h-1zM575,100h1v1h-1zM575,106h1v1h-1zM580,103h1v1h-1zM583,100h1v1h-1zM583,106h1v1h-1zM588,103h1v1h-1zM591,100h1v1h-1zM591,106h1v1h-1zM596,103h1v1h-1zM599,100h1v1h-1zM599,106h1v1h-1zM604,103h1v1h-1zM607,100h1v1h-1zM607,106h1v1h-1zM612,103h1v1h-1zM615,100h1v1h-1zM615,106h1v1h-1zM620,103h1v1h-1zM623,100h1v1h-1zM623,106h1v1h-1zM628,103h1v1h-1zM631,100h1v1h-1zM631,106h1v1h-1zM636,103h1v1h-1zM639,100h1v1h-1zM639,106h1v1h-1zM644,103h1v1h-1zM647,100h1v1h-1zM647,106h1v1h-1zM652,103h1v1h-1zM655,100h1v1h-1zM655,106h1v1h-1zM660,103h1v1h-1zM663,100h1v1h-1zM663,106h1v1h-1zM668,103h1v1h-1zM671,100h1v1h-1zM671,106h1v1h-1zM676,103h1v1h-1zM679,100h1v1h-1zM679,106h1v1h-1zM684,103h1v1h-1zM687,100h1v1h-1zM687,106h1v1h-1zM692,103h1v1h-1zM695,100h1v1h-1zM695,106h1v1h-1zM700,103h1v1h-1zM703,100h1v1h-1zM703,106h1v1h-1zM708,103h1v1h-1zM711,100h1v1h-1zM711,106h1v1h-1zM716,103h1v1h-1zM719,100h1v1h-1zM719,106h1v1h-1zM724,103h1v1h-1zM727,100h1v1h-1zM727,106h1v1h-1zM732,103h1v1h-1zM735,100h1v1h-1zM735,106h1v1h-1zM740,103h1v1h-1zM743,100h1v1h-1zM743,106h1v1h-1zM748,103h1v1h-1zM751,100h1v1h-1zM751,106h1v1h-1zM756,103h1v1h-1zM759,100h1v1h-1zM759,106h1v1h-1zM764,103h1v1h-1zM767,100h1v1h-1zM767,106h1v1h-1zM772,103h1v1h-1zM775,100h1v1h-1zM775,106h1v1h-1zM780,103h1v1h-1zM783,100h1v1h-1zM783,106h1v1h-1zM788,103h1v1h-1zM791,100h1v1h-1zM791,106h1v1h-1zM796,103h1v1h-1zM799,100h1v1h-1zM799,106h1v1h-1zM804,103h1v1h-1zM807,100h1v1h-1zM807,106h1v1h-1zM812,103h1v1h-1zM815,100h1v1h-1zM815,106h1v1h-1zM820,103h1v1h-1zM823,100h1v1h-1zM823,106h1v1h-1zM828,103h1v1h-1zM831,100h1v1h-1zM831,106h1v1h-1zM836,103h1v1h-1zM839,100h1v1h-1zM839,106h1v1h-1zM844,103h1v1h-1zM847,100h1v1h-1zM847,106h1v1h-1zM852,103h1v1h-1zM855,100h1v1h-1zM855,106h1v1h-1zM860,103h1v1h-1zM863,100h1v1h-1zM863,106h1v1h-1zM868,103h1v1h-1zM871,100h1v1h-1zM871,106h1v1h-1zM876,103h1v1h-1zM879,100h1v1h-1zM879,106h1v1h-1zM884,103h1v1h-1zM887,100h1v1h-1zM887,106h1v1h-1zM892,103h1v1h-1zM895,100h1v1h-1zM895,106h1v1h-1zM900,103h1v1h-1zM903,100h1v1h-1zM903,106h1v1h-1zM908,103h1v1h-1zM911,100h1v1h-1zM911,106h1v1h-1zM916,103h1v1h-1zM919,100h1v1h-1zM919,106h1v1h-1zM924,103h1v1h-1zM927,100h1v1h-1zM927,106h1v1h-1zM932,103h1v1h-1zM935,100h1v1h-1zM935,106h1v1h-1zM940,103h1v1h-1zM943,100h1v1h-1zM943,106h1v1h-1z" fill="#0c0c78" fill-opacity="0.5"/>
<text transform="matrix(1,0,0,1.1,0,124)" x="110 119 127 136 145" y="0" font-size="13" fill="#0c0c78" >BTBD9</text>
<rect x="157" y="119" width="792" height="1" fill="#0c0c78"/>
<path d="M157,118h1v3h-1zM158,117h1v1h-1zM158,121h1v1h-1zM165,118h1v3h-1zM166,117h1v1h-1zM166,121h1v1h-1zM173,118h1v3h-1zM174,117h1v1h-1zM174,121h1v1h-1zM181,118h1v3h-1zM182,117h1v1h-1zM182,121h1v1h-1zM189,118h1v3h-1zM190,117h1v1h-1zM190,121h1v1h-1zM197,118h1v3h-1zM198,117h1v1h-1zM198,121h1v1h-1zM205,118h1v3h-1zM206,117h1v1h-1zM206,121h1v1h-1zM213,118h1v3h-1zM214,117h1v1h-1zM214,121h1v1h-1zM221,118h1v3h-1zM222,117h1v1h-1zM222,121h1v1h-1zM229,118h1v3h-1zM230,117h1v1h-1zM230,121h1v1h-1zM237,118h1v3h-1zM238,117h1v1h-1zM238,121h1v1h-1zM245,118h1v3h-1zM246,117h1v1h-1zM246,121h1v1h-1zM253,118h1v3h-1zM254,117h1v1h-1zM254,121h1v1h-1zM261,118h1v3h-1zM262,117h1v1h-1zM262,121h1v1h-1zM269,118h1v3h-1zM270,117h1v1h-1zM270,121h1v1h-1zM277,118h1v3h-1zM278,117h1v1h-1zM278,121h1v1h-1zM285,118h1v3h-1zM286,117h1v1h-1zM286,121h1v1h-1zM293,118h1v3h-1zM294,117h1v1h-1zM294,121h1v1h-1zM301,118h1v3h-1zM302,117h1v1h-1zM302,121h1v1h-1zM309,118h1v3h-1zM310,117h1v1h-1zM310,121h1v1h-1zM317,118h1v3h-1zM318,117h1v1h-1zM318,121h1v1h-1zM325,118h1v3h-1zM326,117h1v1h-1zM326,121h1v1h-1zM333,118h1v3h-1zM334,117h1v1h-1zM334,121h1v1h-1zM341,118h1v3h-1zM342,117h1v1h-1zM342,121h1v1h-1zM349,118h1v3h-1zM350,117h1v1h-1zM350,121h1v1h-1zM357,118h1v3h-1zM358,117h1v1h-1zM358,121h1v1h-1zM365,118h1v3h-1zM366,117h1v1h-1zM366,121h1v1h-1zM373,118h1v3h-1zM374,117h1v1h-1zM374,121h1v1h-1zM381,118h1v3h-1zM382,117h1v1h-1zM382,121h1v1h-1zM389,118h1v3h-1zM390,117h1v1h-1zM390,121h1v1h-1zM397,118h1v3h-1zM398,117h1v1h-1zM398,121h1v1h-1zM405,118h1v3h-1zM406,117h1v1h-1zM406,121h1v1h-1zM413,118h1v3h-1zM414,117h1v1h-1zM414,121h1v1h-1zM421,118h1v3h-1zM422,117h1v1h-1zM422,121h1v1h-1zM429,118h1v3h-1zM430,117h1v1h-1zM430,121h1v1h-1zM437,118h1v3h-1zM438,117h1v1h-1zM438,121h1v1h-1zM445,118h1v3h-1zM446,117h1v1h-1zM446,121h1v1h-1zM453,118h1v3h-1zM454,117h1v1h-1zM454,121h1v1h-1zM461,118h1v3h-1zM462,117h1v1h-1zM462,121h1v1h-1zM469,118h1v3h-1zM470,117h1v1h-1zM470,121h1v1h-1zM477,118h1v3h-1zM478,117h1v1h-1zM478,121h1v1h-1zM485,118h1v3h-1zM486,117h1v1h-1zM486,121h1v1h-1zM493,118h1v3h-1zM494,117h1v1h-1zM494,121h1v1h-1zM501,118h1v3h-1zM502,117h1v1h-1zM502,121h1v1h-1zM509,118h1v3h-1zM510,117h1v1h-1zM510,121h1v1h-1zM517,118h1v3h-1zM518,117h1v1h-1zM518,121h1v1h-1zM525,118h1v3h-1zM526,117h1v1h-1zM526,121h1v1h-1zM533,118h1v3h-1zM534,117h1v1h-1zM534,121h1v1h-1zM541,118h1v3h-1zM542,117h1v1h-1zM542,121h1v1h-1zM549,118h1v3h-1zM550,117h1v1h-1zM550,121h1v1h-1zM557,118h1v3h-1zM558,117h1v1h-1zM558,121h1v1h-1zM565,118h1v3h-1zM566,117h1v1h-1zM566,121h1v1h-1zM573,118h1v3h-1zM574,117h1v1h-1zM574,121h1v1h-1zM581,118h1v3h-1zM582,117h1v1h-1zM582,121h1v1h-1zM589,118h1v3h-1zM590,117h1v1h-1zM590,121h1v1h-1zM597,118h1v3h-1zM598,117h1v1h-1zM598,121h1v1h-1zM605,118h1v3h-1zM606,117h1v1h-1zM606,121h1v1h-1zM613,118h1v3h-1zM614,117h1v1h-1zM614,121h1v1h-1zM621,118h1v3h-1zM622,117h1v1h-1zM622,121h1v1h-1zM629,118h1v3h-1zM630,117h1v1h-1zM630,121h1v1h-1zM637,118h1v3h-1zM638,117h1v1h-1zM638,121h1v1h-1zM645,118h1v3h-1zM646,117h1v1h-1zM646,121h1v1h-1zM653,118h1v3h-1zM654,117h1v1h-1zM654,121h1v1h-1zM661,118h1v3h-1zM662,117h1v1h-1zM662,121h1v1h-1zM669,118h1v3h-1zM670,117h1v1h-1zM670,121h1v1h-1zM677,118h1v3h-1zM678,117h1v1h-1zM678,121h1v1h-1zM685,118h1v3h-1zM686,117h1v1h-1zM686,121h1v1h-1zM693,118h1v3h-1zM694,117h1v1h-1zM694,121h1v1h-1zM701,118h1v3h-1zM702,117h1v1h-1zM702,121h1v1h-1zM709,118h1v3h-1zM710,117h1v1h-1zM710,121h1v1h-1zM717,118h1v3h-1zM718,117h1v1h-1zM718,121h1v1h-1zM725,118h1v3h-1zM726,117h1v1h-1zM726,121h1v1h-1zM733,118h1v3h-1zM734,117h1v1h-1zM734,121h1v1h-1zM741,118h1v3h-1zM742,117h1v1h-1zM742,121h1v1h-1zM749,118h1v3h-1zM750,117h1v1h-1zM750,121h1v1h-1zM757,118h1v3h-1zM758,117h1v1h-1zM758,121h1v1h-1zM765,118h1v3h-1zM766,117h1v1h-1zM766,121h1v1h-1zM773,118h1v3h-1zM774,117h1v1h-1zM774,121h1v1h-1zM781,118h1v3h-1zM782,117h1v1h-1zM782,121h1v1h-1zM789,118h1v3h-1zM790,117h1v1h-1zM790,121h1v1h-1zM797,118h1v3h-1zM798,117h1v1h-1zM798,121h1v1h-1zM805,118h1v3h-1zM806,117h1v1h-1zM806,121h1v1h-1zM813,118h1v3h-1zM814,117h1v1h-1zM814,121h1v1h-1zM821,118h1v3h-1zM822,117h1v1h-1zM822,121h1v1h-1zM829,118h1v3h-1zM830,117h1v1h-1zM830,121h1v1h-1zM837,118h1v3h-1zM838,117h1v1h-1zM838,121h1v1h-1zM845,118h1v3h-1zM846,117h1v1h-1zM846,121h1v1h-1zM853,118h1v3h-1zM854,117h1v1h-1zM854,121h1v1h-1zM861,118h1v3h-1zM862,117h1v1h-1zM862,121h1v1h-1zM869,118h1v3h-1zM870,117h1v1h-1zM870,121h1v1h-1zM877,118h1v3h-1zM878,117h1v1h-1zM878,121h1v1h-1zM885,118h1v3h-1zM886,117h1v1h-1zM886,121h1v1h-1zM893,118h1v3h-1zM894,117h1v1h-1zM894,121h1v1h-1zM901,118h1v3h-1zM902,117h1v1h-1zM902,121h1v1h-1zM909,118h1v3h-1zM910,117h1v1h-1zM910,121h1v1h-1zM917,118h1v3h-1zM918,117h1v1h-1zM918,121h1v1h-1zM925,118h1v3h-1zM926,117h1v1h-1zM926,121h1v1h-1zM933,118h1v3h-1zM934,117h1v1h-1zM934,121h1v1h-1zM941,118h1v3h-1zM942,117h1v1h-1zM942,121h1v1h-1z" fill="#0c0c78"/>
<path d="M156,119h1v1h-1zM159,116h1v1h-1zM159,122h1v1h-1zM164,119h1v1h-1zM167,116h1v1h-1zM167,122h1v1h-1zM172,119h1v1h-1zM175,116h1v1h-1zM175,122h1v1h-1zM180,119h1v1h-1zM183,116h1v1h-1zM183,122h1v1h-1zM188,119h1v1h-1zM191,116h1v1h-1zM191,122h1v1h-1zM196,119h1v1h-1zM199,116h1v1h-1zM199,122h1v1h-1zM204,119h1v1h-1zM207,116h1v1h-1zM207,122h1v1h-1zM212,119h1v1h-1zM215,116h1v1h-1zM215,122h1v1h-1zM220,119h1v1h-1zM223,116h1v1h-1zM223,122h1v1h-1zM228,119h1v1h-1zM231,116h1v1h-1zM231,122h1v1h-1zM236,119h1v1h-1zM239,116h1v1h-1zM239,122h1v1h-1zM244,119h1v1h-1zM247,116h1v1h-1zM247,122h1v1h-1zM252,119h1v1h-1zM255,116h1v1h-1zM255,122h1v1h-1zM260,119h1v1h-1zM263,116h1v1h-1zM263,122h1v1h-1zM268,119h1v1h-1zM271,116h1v1h-1zM271,122h1v1h-1zM276,119h1v1h-1zM279,116h1v1h-1zM279,122h1v1h-1zM284,119h1v1h-1zM287,116h1v1h-1zM287,122h1v1h-1zM292,119h1v1h-1zM295,116h1v1h-1zM295,122h1v1h-1zM300,119h1v1h-1zM303,116h1v1h-1zM303,122h1v1h-1zM308,119h1v1h-1zM311,116h1v1h-1zM311,122h1v1h-1zM316,119h1v1h-1zM319,116h1v1h-1zM319,122h1v1h-1zM324,119h1v1h-1zM327,116h1v1h-1zM327,122h1v1h-1zM332,119h1v1h-1zM335,116h1v1h-1zM335,122h1v1h-1zM340,119h1v1h-1zM343,116h1v1h-1zM343,122h1v1h-1zM348,119h1v1h-1zM351,116h1v1h-1zM351,122h1v1h-1zM356,119h1v1h-1zM359,116h1v1h-1zM359,122h1v1h-1zM364,119h1v1h-1zM367,116h1v1h-1zM367,122h1v1h-1zM372,119h1v1h-1zM375,116h1v1h-1zM375,122h1v1h-1zM380,119h1v1h-1zM383,116h1v1h-1zM383,122h1v1h-1zM388,119h1v1h-1zM391,116h1v1h-1zM391,122h1v1h-1zM396,119h1v1h-1zM399,116h1v1h-1zM399,122h1v1h-1zM404,119h1v1h-1zM407,116h1v1h-1zM407,122h1v1h-1zM412,119h1v1h-1zM415,116h1v1h-1zM415,122h1v1h-1zM420,119h1v1h-1zM423,116h1v1h-1zM423,122h1v1h-1zM428,119h1v1h-1zM431,116h1v1h-1zM431,122h1v1h-1zM436,119h1v1h-1zM439,116h1v1h-1zM439,122h1v1h-1zM444,119h1v1h-1zM447,116h1v1h-1zM447,122h1v1h-1zM452,119h1v1h-1zM455,116h1v1h-1zM455,122h1v1h-1zM460,119h1v1h-1zM463,116h1v1h-1zM463,122h1v1h-1zM468,119h1v1h-1zM471,116h1v1h-1zM471,122h1v1h-1zM476,119h1v1h-1zM479,116h1v1h-1zM479,122h1v1h-1zM484,119h1v1h-1zM487,116h1v1h-1zM487,122h1v1h-1zM492,119h1v1h-1zM495,116h1v1h-1zM495,122h1v1h-1zM500,119h1v1h-1zM503,116h1v1h-1zM503,122h1v1h-1zM508,119h1v1h-1zM511,116h1v1h-1zM511,122h1v1h-1zM516,119h1v1h-1zM519,116h1v1h-1zM519,122h1v1h-1zM524,119h1v1h-1zM527,116h1v1h-1zM527,122h1v1h-1zM532,119h1v1h-1zM535,116h1v1h-1zM535,122h1v1h-1zM540,119h1v1h-1zM543,116h1v1h-1zM543,122h1v1h-1zM548,119h1v1h-1zM551,116h1v1h-1zM551,122h1v1h-1zM556,119h1v1h-1zM559,116h1v1h-1zM559,122h1v1h-1zM564,119h1v1h-1zM567,116h1v1h-1zM567,122h1v1h-1zM572,119h1v1h-1zM575,116h1v1h-1zM575,122h1v1h-1zM580,119h1v1h-1zM583,116h1v1h-1zM583,122h1v1h-1zM588,119h1v1h-1zM591,116h1v1h-1zM591,122h1v1h-1zM596,119h1v1h-1zM599,116h1v1h-1zM599,122h1v1h-1zM604,119h1v1h-1zM607,116h1v1h-1zM607,122h1v1h-1zM612,119h1v1h-1zM615,116h1v1h-1zM615,122h1v1h-1zM620,119h1v1h-1zM623,116h1v1h-1zM623,122h1v1h-1zM628,119h1v1h-1zM631,116h1v1h-1zM631,122h1v1h-1zM636,119h1v1h-1zM639,116h1v1h-1zM639,122h1v1h-1zM644,119h1v1h-1zM647,116h1v1h-1zM647,122h1v1h-1zM652,119h1v1h-1zM655,116h1v1h-1zM655,122h1v1h-1zM660,119h1v1h-1zM663,116h1v1h-1zM663,122h1v1h-1zM668,119h1v1h-1zM671,116h1v1h-1zM671,122h1v1h-1zM676,119h1v1h-1zM679,116h1v1h-1zM679,122h1v1h-1zM684,119h1v1h-1zM687,116h1v1h-1zM687,122h1v1h-1zM692,119h1v1h-1zM695,116h1v1h-1zM695,122h1v1h-1zM700,119h1v1h-1zM703,116h1v1h-1zM703,122h1v1h-1zM708,119h1v1h-1zM711,116h1v1h-1zM711,122h1v1h-1zM716,119h1v1h-1zM719,116h1v1h-1zM719,122h1v1h-1zM724,119h1v1h-1zM727,116h1v1h-1zM727,122h1v1h-1zM732,119h1v1h-1zM735,116h1v1h-1zM735,122h1v1h-1zM740,119h1v1h-1zM743,116h1v1h-1zM743,122h1v1h-1zM748,119h1v1h-1zM751,116h1v1h-1zM751,122h1v1h-1zM756,119h1v1h-1zM759,116h1v1h-1zM759,122h1v1h-1zM764,119h1v1h-1zM767,116h1v1h-1zM767,122h1v1h-1zM772,119h1v1h-1zM775,116h1v1h-1zM775,122h1v1h-1zM780,119h1v1h-1zM783,116h1v1h-1zM783,122h1v1h-1zM788,119h1v1h-1zM791,116h1v1h-1zM791,122h1v1h-1zM796,119h1v1h-1zM799,116h1v1h-1zM799,122h1v1h-1zM804,119h1v1h-1zM807,116h1v1h-1zM807,122h1v1h-1zM812,119h1v1h-1zM815,116h1v1h-1zM815,122h1v1h-1zM820,119h1v1h-1zM823,116h1v1h-1zM823,122h1v1h-1zM828,119h1v1h-1zM831,116h1v1h-1zM831,122h1v1h-1zM836,119h1v1h-1zM839,116h1v1h-1zM839,122h1v1h-1zM844,119h1v1h-1zM847,116h1v1h-1zM847,122h1v1h-1zM852,119h1v1h-1zM855,116h1v1h-1zM855,122h1v1h-1zM860,119h1v1h-1zM863,116h1v1h-1zM863,122h1v1h-1zM868,119h1v1h-1zM871,116h1v1h-1zM871,122h1v1h-1zM876,119h1v1h-1zM879,116h1v1h-1zM879,122h1v1h-1zM884,119h1v1h-1zM887,116h1v1h-1zM887,122h1v1h-1zM892,119h1v1h-1zM895,116h1v1h-1zM895,122h1v1h-1zM900,119h1v1h-1zM903,116h1v1h-1zM903,122h1v1h-1zM908,119h1v1h-1zM911,116h1v1h-1zM911,122h1v1h-1zM916,119h1v1h-1zM919,116h1v1h-1zM919,122h1v1h-1zM924,119h1v1h-1zM927,116h1v1h-1zM927,122h1v1h-1zM932,119h1v1h-1zM935,116h1v1h-1zM935,122h1v1h-1zM940,119h1v1h-1zM943,116h1v1h-1zM943,122h1v1h-1z" fill="#0c0c78" fill-opacity="0.5"/>
<text transform="matrix(1,0,0,1.1,0,140)" x="110 119 127 136 145" y="0" font-size="13" fill="#186eaf" >BTBD9</text>
<rect x="157" y="135" width="792" height="1" fill="#186eaf"/>
<path d="M157,134h1v3h-1zM158,133h1v1h-1zM158,137h1v1h-1zM165,134h1v3h-1zM166,133h1v1h-1zM166,137h1v1h-1zM173,134h1v3h-1zM174,133h1v1h-1zM174,137h1v1h-1zM181,134h1v3h-1zM182,133h1v1h-1zM182,137h1v1h-1zM189,134h1v3h-1zM190,133h1v1h-1zM190,137h1v1h-1zM197,134h1v3h-1zM198,133h1v1h-1zM198,137h1v1h-1zM205,134h1v3h-1zM206,133h1v1h-1zM206,137h1v1h-1zM213,134h1v3h-1zM214,133h1v1h-1zM214,137h1v1h-1zM221,134h1v3h-1zM222,133h1v1h-1zM222,137h1v1h-1zM229,134h1v3h-1zM230,133h1v1h-1zM230,137h1v1h-1zM237,134h1v3h-1zM238,133h1v1h-1zM238,137h1v1h-1zM245,134h1v3h-1zM246,133h1v1h-1zM246,137h1v1h-1zM253,134h1v3h-1zM254,133h1v1h-1zM254,137h1v1h-1zM261,134h1v3h-1zM262,133h1v1h-1zM262,137h1v1h-1zM269,134h1v3h-1zM270,133h1v1h-1zM270,137h1v1h-1zM277,134h1v3h-1zM278,133h1v1h-1zM278,137h1v1h-1zM285,134h1v3h-1zM286,133h1v1h-1zM286,137h1v1h-1zM293,134h1v3h-1zM294,133h1v1h-1zM294,137h1v1h-1zM301,134h1v3h-1zM302,133h1v1h-1zM302,137h1v1h-1zM309,134h1v3h-1zM310,133h1v1h-1zM310,137h1v1h-1zM317,134h1v3h-1zM318,133h1v1h-1zM318,137h1v1h-1zM325,134h1v3h-1zM326,133h1v1h-1zM326,137h1v1h-1zM333,134h1v3h-1zM334,133h1v1h-1zM334,137h1v1h-1zM341,134h1v3h-1zM342,133h1v1h-1zM342,137h1v1h-1zM349,134h1v3h-1zM350,133h1v1h-1zM350,137h1v1h-1zM357,134h1v3h-1zM358,133h1v1h-1zM358,137h1v1h-1zM365,134h1v3h-1zM366,133h1v1h-1zM366,137h1v1h-1zM373,134h1v3h-1zM374,133h1v1h-1zM374,137h1v1h-1zM381,134h1v3h-1zM382,133h1v1h-1zM382,137h1v1h-1zM389,134h1v3h-1zM390,133h1v1h-1zM390,137h1v1h-1zM397,134h1v3h-1zM398,133h1v1h-1zM398,137h1v1h-1zM405,134h1v3h-1zM406,133h1v1h-1zM406,137h1v1h-1zM413,134h1v3h-1zM414,133h1v1h-1zM414,137h1v1h-1zM421,134h1v3h-1zM422,133h1v1h-1zM422,137h1v1h-1zM429,134h1v3h-1zM430,133h1v1h-1zM430,137h1v1h-1zM437,134h1v3h-1zM438,133h1v1h-1zM438,137h1v1h-1zM445,134h1v3h-1zM446,133h1v1h-1zM446,137h1v1h-1zM453,134h1v3h-1zM454,133h1v1h-1zM454,137h1v1h-1zM461,134h1v3h-1zM462,133h1v1h-1zM462,137h1v1h-1zM469,134h1v3h-1zM470,133h1v1h-1zM470,137h1v1h-1zM477,134h1v3h-1zM478,133h1v1h-1zM478,137h1v1h-1zM485,134h1v3h-1zM486,133h1v1h-1zM486,137h1v1h-1zM493,134h1v3h-1zM494,133h1v1h-1zM494,137h1v1h-1zM501,134h1v3h-1zM502,133h1v1h-1zM502,137h1v1h-1zM509,134h1v3h-1zM510,133h1v1h-1zM510,137h1v1h-1zM517,134h1v3h-1zM518,133h1v1h-1zM518,137h1v1h-1zM525,134h1v3h-1zM526,133h1v1h-1zM526,137h1v1h-1zM533,134h1v3h-1zM534,133h1v1h-1zM534,137h1v1h-1zM541,134h1v3h-1zM542,133h1v1h-1zM542,137h1v1h-1zM549,134h1v3h-1zM550,133h1v1h-1zM550,137h1v1h-1zM557,134h1v3h-1zM558,133h1v1h-1zM558,137h1v1h-1zM565,134h1v3h-1zM566,133h1v1h-1zM566,137h1v1h-1zM573,134h1v3h-1zM574,133h1v1h-1zM574,137h1v1h-1zM581,134h1v3h-1zM582,133h1v1h-1zM582,137h1v1h-1zM589,134h1v3h-1zM590,133h1v1h-1zM590,137h1v1h-1zM597,134h1v3h-1zM598,133h1v1h-1zM598,137h1v1h-1zM605,134h1v3h-1zM606,133h1v1h-1zM606,137h1v1h-1zM613,134h1v3h-1zM614,133h1v1h-1zM614,137h1v1h-1zM621,134h1v3h-1zM622,133h1v1h-1zM622,137h1v1h-1zM629,134h1v3h-1zM630,133h1v1h-1zM630,137h1v1h-1zM637,134h1v3h-1zM638,133h1v1h-1zM638,137h1v1h-1zM645,134h1v3h-1zM646,133h1v1h-1zM646,137h1v1h-1zM653,134h1v3h-1zM654,133h1v1h-1zM654,137h1v1h-1zM661,134h1v3h-1zM662,133h1v1h-1zM662,137h1v1h-1zM669,134h1v3h-1zM670,133h1v1h-1zM670,137h1v1h-1zM677,134h1v3h-1zM678,133h1v1h-1zM678,137h1v1h-1zM685,134h1v3h-1zM686,133h1v1h-1zM686,137h1v1h-1zM693,134h1v3h-1zM694,133h1v1h-1zM694,137h1v1h-1zM701,134h1v3h-1zM702,133h1v1h-1zM702,137h1v1h-1zM709,134h1v3h-1zM710,133h1v1h-1zM710,137h1v1h-1zM717,134h1v3h-1zM718,133h1v1h-1zM718,137h1v1h-1zM725,134h1v3h-1zM726,133h1v1h-1zM726,137h1v1h-1zM733,134h1v3h-1zM734,133h1v1h-1zM734,137h1v1h-1zM741,134h1v3h-1zM742,133h1v1h-1zM742,137h1v1h-1zM749,134h1v3h-1zM750,133h1v1h-1zM750,137h1v1h-1zM757,134h1v3h-1zM758,133h1v1h-1zM758,137h1v1h-1zM765,134h1v3h-1zM766,133h1v1h-1zM766,137h1v1h-1zM773,134h1v3h-1zM774,133h1v1h-1zM774,137h1v1h-1zM781,134h1v3h-1zM782,133h1v1h-1zM782,137h1v1h-1zM789,134h1v3h-1zM790,133h1v1h-1zM790,137h1v1h-1zM797,134h1v3h-1zM798,133h1v1h-1zM798,137h1v1h-1zM805,134h1v3h-1zM806,133h1v1h-1zM806,137h1v1h-1zM813,134h1v3h-1zM814,133h1v1h-1zM814,137h1v1h-1zM821,134h1v3h-1zM822,133h1v1h-1zM822,137h1v1h-1zM829,134h1v3h-1zM830,133h1v1h-1zM830,137h1v1h-1zM837,134h1v3h-1zM838,133h1v1h-1zM838,137h1v1h-1zM845,134h1v3h-1zM846,133h1v1h-1zM846,137h1v1h-1zM853,134h1v3h-1zM854,133h1v1h-1zM854,137h1v1h-1zM861,134h1v3h-1zM862,133h1v1h-1zM862,137h1v1h-1zM869,134h1v3h-1zM870,133h1v1h-1zM870,137h1v1h-1zM877,134h1v3h-1zM878,133h1v1h-1zM878,137h1v1h-1zM885,134h1v3h-1zM886,133h1v1h-1zM886,137h1v1h-1zM893,134h1v3h-1zM894,133h1v1h-1zM894,137h1v1h-1zM901,134h1v3h-1zM902,133h1v1h-1zM902,137h1v1h-1zM909,134h1v3h-1zM910,133h1v1h-1zM910,137h1v1h-1zM917,134h1v3h-1zM918,133h1v1h-1zM918,137h1v1h-1zM925,134h1v3h-1zM926,133h1v1h-1zM926,137h1v1h-1zM933,134h1v3h-1zM934,133h1v1h-1zM934,137h1v1h-1zM941,134h1v3h-1zM942,133h1v1h-1zM942,137h1v1h-1z" fill="#186eaf"/>
<path d="M156,135h1v1h-1zM159,132h1v1h-1zM159,138h1v1h-1zM164,135h1v1h-1zM167,132h1v1h-1zM167,138h1v1h-1zM172,135h1v1h-1zM175,132h1v1h-1zM175,138h1v1h-1zM180,135h1v1h-1zM183,132h1v1h-1zM183,138h1v1h-1zM188,135h1v1h-1zM191,132h1v1h-1zM191,138h1v1h-1zM196,135h1v1h-1zM199,132h1v1h-1zM199,138h1v1h-1zM204,135h1v1h-1zM207,132h1v1h-1zM207,138h1v1h-1zM212,135h1v1h-1zM215,132h1v1h-1zM215,138h1v1h-1zM220,135h1v1h-1zM223,132h1v1h-1zM223,138h1v1h-1zM228,135h1v1h-1zM231,132h1v1h-1zM231,138h1v1h-1zM236,135h1v1h-1zM239,132h1v1h-1zM239,138h1v1h-1zM244,135h1v1h-1zM247,132h1v1h-1zM247,138h1v1h-1zM252,135h1v1h-1zM255,132h1v1h-1zM255,138h1v1h-1zM260,135h1v1h-1zM263,132h1v1h-1zM263,138h1v1h-1zM268,135h1v1h-1zM271,132h1v1h-1zM271,138h1v1h-1zM276,135h1v1h-1zM279,132h1v1h-1zM279,138h1v1h-1zM284,135h1v1h-1zM287,132h1v1h-1zM287,138h1v1h-1zM292,135h1v1h-1zM295,132h1v1h-1zM295,138h1v1h-1zM300,135h1v1h-1zM303,132h1v1h-1zM303,138h1v1h-1zM308,135h1v1h-1zM311,132h1v1h-1zM311,138h1v1h-1zM316,135h1v1h-1zM319,132h1v1h-1zM319,138h1v1h-1zM324,135h1v1h-1zM327,132h1v1h-1zM327,138h1v1h-1zM332,135h1v1h-1zM335,132h1v1h-1zM335,138h1v1h-1zM340,135h1v1h-1zM343,132h1v1h-1zM343,138h1v1h-1zM348,135h1v1h-1zM351,132h1v1h-1zM351,138h1v1h-1zM356,135h1v1h-1zM359,132h1v1h-1zM359,138h1v1h-1zM364,135h1v1h-1zM367,132h1v1h-1zM367,138h1v1h-1zM372,135h1v1h-1zM375,132h1v1h-1zM375,138h1v1h-1zM380,135h1v1h-1zM383,132h1v1h-1zM383,138h1v1h-1zM388,135h1v1h-1zM391,132h1v1h-1zM391,138h1v1h-1zM396,135h1v1h-1zM399,132h1v1h-1zM399,138h1v1h-1zM404,135h1v1h-1zM407,132h1v1h-1zM407,138h1v1h-1zM412,135h1v1h-1zM415,132h1v1h-1zM415,138h1v1h-1zM420,135h1v1h-1zM423,132h1v1h-1zM423,138h1v1h-1zM428,135h1v1h-1zM431,132h1v1h-1zM431,138h1v1h-1zM436,135h1v1h-1zM439,132h1v1h-1zM439,138h1v1h-1zM444,135h1v1h-1zM447,132h1v1h-1zM447,138h1v1h-1zM452,135h1v1h-1zM455,132h1v1h-1zM455,138h1v1h-1zM460,135h1v1h-1zM463,132h1v1h-1zM463,138h1v1h-1zM468,135h1v1h-1zM471,132h1v1h-1zM471,138h1v1h-1zM476,135h1v1h-1zM479,132h1v1h-1zM479,138h1v1h-1zM484,135h1v1h-1zM487,132h1v1h-1zM487,138h1v1h-1zM492,135h1v1h-1zM495,132h1v1h-1zM495,138h1v1h-1zM500,135h1v1h-1zM503,132h1v1h-1zM503,138h1v1h-1zM508,135h1v1h-1zM511,132h1v1h-1zM511,138h1v1h-1zM516,135h1v1h-1zM519,132h1v1h-1zM519,138h1v1h-1zM524,135h1v1h-1zM527,132h1v1h-1zM527,138h1v1h-1zM532,135h1v1h-1zM535,132h1v1h-1zM535,138h1v1h-1zM540,135h1v1h-1zM543,132h1v1h-1zM543,138h1v1h-1zM548,135h1v1h-1zM551,132h1v1h-1zM551,138h1v1h-1zM556,135h1v1h-1zM559,132h1v1h-1zM559,138h1v1h-1zM564,135h1v1h-1zM567,132h1v1h-1zM567,138h1v1h-1zM572,135h1v1h-1zM575,132h1v1h-1zM575,138h1v1h-1zM580,135h1v1h-1zM583,132h1v1h-1zM583,138h1v1h-1zM588,135h1v1h-1zM591,132h1v1h-1zM591,138h1v1h-1zM596,135h1v1h-1zM599,132h1v1h-1zM599,138h1v1h-1zM604,135h1v1h-1zM607,132h1v1h-1zM607,138h1v1h-1zM612,135h1v1h-1zM615,132h1v1h-1zM615,138h1v1h-1zM620,135h1v1h-1zM623,132h1v1h-1zM623,138h1v1h-1zM628,135h1v1h-1zM631,132h1v1h-1zM631,138h1v1h-1zM636,135h1v1h-1zM639,132h1v1h-1zM639,138h1v1h-1zM644,135h1v1h-1zM647,132h1v1h-1zM647,138h1v1h-1zM652,135h1v1h-1zM655,132h1v1h-1zM655,138h1v1h-1zM660,135h1v1h-1zM663,132h1v1h-1zM663,138h1v1h-1zM668,135h1v1h-1zM671,132h1v1h-1zM671,138h1v1h-1zM676,135h1v1h-1zM679,132h1v1h-1zM679,138h1v1h-1zM684,135h1v1h-1zM687,132h1v1h-1zM687,138h1v1h-1zM692,135h1v1h-1zM695,132h1v1h-1zM695,138h1v1h-1zM700,135h1v1h-1zM703,132h1v1h-1zM703,138h1v1h-1zM708,135h1v1h-1zM711,132h1v1h-1zM711,138h1v1h-1zM716,135h1v1h-1zM719,132h1v1h-1zM719,138h1v1h-1zM724,135h1v1h-1zM727,132h1v1h-1zM727,138h1v1h-1zM732,135h1v1h-1zM735,132h1v1h-1zM735,138h1v1h-1zM740,135h1v1h-1zM743,132h1v1h-1zM743,138h1v1h-1zM748,135h1v1h-1zM751,132h1v1h-1zM751,138h1v1h-1zM756,135h1v1h-1zM759,132h1v1h-1zM759,138h1v1h-1zM764,135h1v1h-1zM767,132h1v1h-1zM767,138h1v1h-1zM772,135h1v1h-1zM775,132h1v1h-1zM775,138h1v1h-1zM780,135h1v1h-1zM783,132h1v1h-1zM783,138h1v1h-1zM788,135h1v1h-1zM791,132h1v1h-1zM791,138h1v1h-1zM796,135h1v1h-1zM799,132h1v1h-1zM799,138h1v1h-1zM804,135h1v1h-1zM807,132h1v1h-1zM807,138h1v1h-1zM812,135h1v1h-1zM815,132h1v1h-1zM815,138h1v1h-1zM820,135h1v1h-1zM823,132h1v1h-1zM823,138h1v1h-1zM828,135h1v1h-1zM831,132h1v1h-1zM831,138h1v1h-1zM836,135h1v1h-1zM839,132h1v1h-1zM839,138h1v1h-1zM844,135h1v1h-1zM847,132h1v1h-1zM847,138h1v1h-1zM852,135h1v1h-1zM855,132h1v1h-1zM855,138h1v1h-1zM860,135h1v1h-1zM863,132h1v1h-1zM863,138h1v1h-1zM868,135h1v1h-1zM871,132h1v1h-1zM871,138h1v1h-1zM876,135h1v1h-1zM879,132h1v1h-1zM879,138h1v1h-1zM884,135h1v1h-1zM887,132h1v1h-1zM887,138h1v1h-1zM892,135h1v1h-1zM895,132h1v1h-1zM895,138h1v1h-1zM900,135h1v1h-1zM903,132h1v1h-1zM903,138h1v1h-1zM908,135h1v1h-1zM911,132h1v1h-1zM911,138h1v1h-1zM916,135h1v1h-1zM919,132h1v1h-1zM919,138h1v1h-1zM924,135h1v1h-1zM927,132h1v1h-1zM927,138h1v1h-1zM932,135h1v1h-1zM935,132h1v1h-1zM935,138h1v1h-1zM940,135h1v1h-1zM943,132h1v1h-1zM943,138h1v1h-1z" fill="#186eaf" fill-opacity="0.5"/>
<text transform="matrix(1,0,0,1.1,0,156)" x="110 119 127 136 145" y="0" font-size="13" fill="#0c0c78" >BTBD9</text>
<rect x="157" y="151" width="792" height="1" fill="#0c0c78"/>
<path d="M157,150h1v3h-1zM158,149h1v1h-1zM158,153h1v1h-1zM165,150h1v3h-1zM166,149h1v1h-1zM166,153h1v1h-1zM173,150h1v3h-1zM174,149h1v1h-1zM174,153h1v1h-1zM181,150h1v3h-1zM182,149h1v1h-1zM182,153h1v1h-1zM189,150h1v3h-1zM190,149h1v1h-1zM190,153h1v1h-1zM197,150h1v3h-1zM198,149h1v1h-1zM198,153h1v1h-1zM205,150h1v3h-1zM206,149h1v1h-1zM206,153h1v1h-1zM213,150h1v3h-1zM214,149h1v1h-1zM214,153h1v1h-1zM221,150h1v3h-1zM222,149h1v1h-1zM222,153h1v1h-1zM229,150h1v3h-1zM230,149h1v1h-1zM230,153h1v1h-1zM237,150h1v3h-1zM238,149h1v1h-1zM238,153h1v1h-1zM245,150h1v3h-1zM246,149h1v1h-1zM246,153h1v1h-1zM253,150h1v3h-1zM254,149h1v1h-1zM254,153h1v1h-1zM261,150h1v3h-1zM262,149h1v1h-1zM262,153h1v1h-1zM269,150h1v3h-1zM270,149h1v1h-1zM270,153h1v1h-1zM277,150h1v3h-1zM278,149h1v1h-1zM278,153h1v1h-1zM285,150h1v3h-1zM286,149h1v1h-1zM286,153h1v1h-1zM293,150h1v3h-1zM294,149h1v1h-1zM294,153h1v1h-1zM301,150h1v3h-1zM302,149h1v1h-1zM302,153h1v1h-1zM309,150h1v3h-1zM310,149h1v1h-1zM310,153h1v1h-1zM317,150h1v3h-1zM318,149h1v1h-1zM318,153h1v1h-1zM325,150h1v3h-1zM326,149h1v1h-1zM326,153h1v1h-1zM333,150h1v3h-1zM334,149h1v1h-1zM334,153h1v1h-1zM341,150h1v3h-1zM342,149h1v1h-1zM342,153h1v1h-1zM349,150h1v3h-1zM350,149h1v1h-1zM350,153h1v1h-1zM357,150h1v3h-1zM358,149h1v1h-1zM358,153h1v1h-1zM365,150h1v3h-1zM366,149h1v1h-1zM366,153h1v1h-1zM373,150h1v3h-1zM374,149h1v1h-1zM374,153h1v1h-1zM381,150h1v3h-1zM382,149h1v1h-1zM382,153h1v1h-1zM389,150h1v3h-1zM390,149h1v1h-1zM390,153h1v1h-1zM397,150h1v3h-1zM398,149h1v1h-1zM398,153h1v1h-1zM405,150h1v3h-1zM406,149h1v1h-1zM406,153h1v1h-1zM413,150h1v3h-1zM414,149h1v1h-1zM414,153h1v1h-1zM421,150h1v3h-1zM422,149h1v1h-1zM422,153h1v1h-1zM429,150h1v3h-1zM430,149h1v1h-1zM430,153h1v1h-1zM437,150h1v3h-1zM438,149h1v1h-1zM438,153h1v1h-1zM445,150h1v3h-1zM446,149h1v1h-1zM446,153h1v1h-1zM453,150h1v3h-1zM454,149h1v1h-1zM454,153h1v1h-1zM461,150h1v3h-1zM462,149h1v1h-1zM462,153h1v1h-1zM469,150h1v3h-1zM470,149h1v1h-1zM470,153h1v1h-1zM477,150h1v3h-1zM478,149h1v1h-1zM478,153h1v1h-1zM485,150h1v3h-1zM486,149h1v1h-1zM486,153h1v1h-1zM493,150h1v3h-1zM494,149h1v1h-1zM494,153h1v1h-1zM501,150h1v3h-1zM502,149h1v1h-1zM502,153h1v1h-1zM509,150h1v3h-1zM510,149h1v1h-1zM510,153h1v1h-1zM517,150h1v3h-1zM518,149h1v1h-1zM518,153h1v1h-1zM525,150h1v3h-1zM526,149h1v1h-1zM526,153h1v1h-1zM533,150h1v3h-1zM534,149h1v1h-1zM534,153h1v1h-1zM541,150h1v3h-1zM542,149h1v1h-1zM542,153h1v1h-1zM549,150h1v3h-1zM550,149h1v1h-1zM550,153h1v1h-1zM557,150h1v3h-1zM558,149h1v1h-1zM558,153h1v1h-1zM565,150h1v3h-1zM566,149h1v1h-1zM566,153h1v1h-1zM573,150h1v3h-1zM574,149h1v1h-1zM574,153h1v1h-1zM581,150h1v3h-1zM582,149h1v1h-1zM582,153h1v1h-1zM589,150h1v3h-1zM590,149h1v1h-1zM590,153h1v1h-1zM597,150h1v3h-1zM598,149h1v1h-1zM598,153h1v1h-1zM605,150h1v3h-1zM606,149h1v1h-1zM606,153h1v1h-1zM613,150h1v3h-1zM614,149h1v1h-1zM614,153h1v1h-1zM621,150h1v3h-1zM622,149h1v1h-1zM622,153h1v1h-1zM629,150h1v3h-1zM630,149h1v1h-1zM630,153h1v1h-1zM637,150h1v3h-1zM638,149h1v1h-1zM638,153h1v1h-1zM645,150h1v3h-1zM646,149h1v1h-1zM646,153h1v1h-1zM653,150h1v3h-1zM654,149h1v1h-1zM654,153h1v1h-1zM661,150h1v3h-1zM662,149h1v1h-1zM662,153h1v1h-1zM669,150h1v3h-1zM670,149h1v1h-1zM670,153h1v1h-1zM677,150h1v3h-1zM678,149h1v1h-1zM678,153h1v1h-1zM685,150h1v3h-1zM686,149h1v1h-1zM686,153h1v1h-1zM693,150h1v3h-1zM694,149h1v1h-1zM694,153h1v1h-1zM701,150h1v3h-1zM702,149h1v1h-1zM702,153h1v1h-1zM709,150h1v3h-1zM710,149h1v1h-1zM710,153h1v1h-1zM717,150h1v3h-1zM718,149h1v1h-1zM718,153h1v1h-1zM725,150h1v3h-1zM726,149h1v1h-1zM726,153h1v1h-1zM733,150h1v3h-1zM734,149h1v1h-1zM734,153h1v1h-1zM741,150h1v3h-1zM742,149h1v1h-1zM742,153h1v1h-1zM749,150h1v3h-1zM750,149h1v1h-1zM750,153h1v1h-1zM757,150h1v3h-1zM758,149h1v1h-1zM758,153h1v1h-1zM765,150h1v3h-1zM766,149h1v1h-1zM766,153h1v1h-1zM773,150h1v3h-1zM774,149h1v1h-1zM774,153h1v1h-1zM781,150h1v3h-1zM782,149h1v1h-1zM782,153h1v1h-1zM789,150h1v3h-1zM790,149h1v1h-1zM790,153h1v1h-1zM797,150h1v3h-1zM798,149h1v1h-1zM798,153h1v1h-1zM805,150h1v3h-1zM806,149h1v1h-1zM806,153h1v1h-1zM813,150h1v3h-1zM814,149h1v1h-1zM814,153h1v1h-1zM821,150h1v3h-1zM822,149h1v1h-1zM822,153h1v1h-1zM829,150h1v3h-1zM830,149h1v1h-1zM830,153h1v1h-1zM837,150h1v3h-1zM838,149h1v1h-1zM838,153h1v1h-1zM845,150h1v3h-1zM846,149h1v1h-1zM846,153h1v1h-1zM853,150h1v3h-1zM854,149h1v1h-1zM854,153h1v1h-1zM861,150h1v3h-1zM862,149h1v1h-1zM862,153h1v1h-1zM869,150h1v3h-1zM870,149h1v1h-1zM870,153h1v1h-1zM877,150h1v3h-1zM878,149h1v1h-1zM878,153h1v1h-1zM885,150h1v3h-1zM886,149h1v1h-1zM886,153h1v1h-1zM893,150h1v3h-1zM894,149h1v1h-1zM894,153h1v1h-1zM901,150h1v3h-1zM902,149h1v1h-1zM902,153h1v1h-1zM909,150h1v3h-1zM910,149h1v1h-1zM910,153h1v1h-1zM917,150h1v3h-1zM918,149h1v1h-1zM918,153h1v1h-1zM925,150h1v3h-1zM926,149h1v1h-1zM926,153h1v1h-1zM933,150h1v3h-1zM934,149h1v1h-1zM934,153h1v1h-1zM941,150h1v3h-1zM942,149h1v1h-1zM942,153h1v1h-1z" fill="#0c0c78"/>
<path d="M156,151h1v1h-1zM159,148h1v1h-1zM159,154h1v1h-1zM164,151h1v1h-1zM167,148h1v1h-1zM167,154h1v1h-1zM172,151h1v1h-1zM175,148h1v1h-1zM175,154h1v1h-1zM180,151h1v1h-1zM183,148h1v1h-1zM183,154h1v1h-1zM188,151h1v1h-1zM191,148h1v1h-1zM191,154h1v1h-1zM196,151h1v1h-1zM199,148h1v1h-1zM199,154h1v1h-1zM204,151h1v1h-1zM207,148h1v1h-1zM207,154h1v1h-1zM212,151h1v1h-1zM215,148h1v1h-1zM215,154h1v1h-1zM220,151h1v1h-1zM223,148h1v1h-1zM223,154h1v1h-1zM228,151h1v1h-1zM231,148h1v1h-1zM231,154h1v1h-1zM236,151h1v1h-1zM239,148h1v1h-1zM239,154h1v1h-1zM244,151h1v1h-1zM247,148h1v1h-1zM247,154h1v1h-1zM252,151h1v1h-1zM255,148h1v1h-1zM255,154h1v1h-1zM260,151h1v1h-1zM263,148h1v1h-1zM263,154h1v1h-1zM268,151h1v1h-1zM271,148h1v1h-1zM271,154h1v1h-1zM276,151h1v1h-1zM279,148h1v1h-1zM279,154h1v1h-1zM284,151h1v1h-1zM287,148h1v1h-1zM287,154h1v1h-1zM292,151h1v1h-1zM295,148h1v1h-1zM295,154h1v1h-1zM300,151h1v1h-1zM303,148h1v1h-1zM303,154h1v1h-1zM308,151h1v1h-1zM311,148h1v1h-1zM311,154h1v1h-1zM316,151h1v1h-1zM319,148h1v1h-1zM319,154h1v1h-1zM324,151h1v1h-1zM327,148h1v1h-1zM327,154h1v1h-1zM332,151h1v1h-1zM335,148h1v1h-1zM335,154h1v1h-1zM340,151h1v1h-1zM343,148h1v1h-1zM343,154h1v1h-1zM348,151h1v1h-1zM351,148h1v1h-1zM351,154h1v1h-1zM356,151h1v1h-1zM359,148h1v1h-1zM359,154h1v1h-1zM364,151h1v1h-1zM367,148h1v1h-1zM367,154h1v1h-1zM372,151h1v1h-1zM375,148h1v1h-1zM375,154h1v1h-1zM380,151h1v1h-1zM383,148h1v1h-1zM383,154h1v1h-1zM388,151h1v1h-1zM391,148h1v1h-1zM391,154h1v1h-1zM396,151h1v1h-1zM399,148h1v1h-1zM399,154h1v1h-1zM404,151h1v1h-1zM407,148h1v1h-1zM407,154h1v1h-1zM412,151h1v1h-1zM415,148h1v1h-1zM415,154h1v1h-1zM420,151h1v1h-1zM423,148h1v1h-1zM423,154h1v1h-1zM428,151h1v1h-1zM431,148h1v1h-1zM431,154h1v1h-1zM436,151h1v1h-1zM439,148h1v1h-1zM439,154h1v1h-1zM444,151h1v1h-1zM447,148h1v1h-1zM447,154h1v1h-1zM452,151h1v1h-1zM455,148h1v1h-1zM455,154h1v1h-1zM460,151h1v1h-1zM463,148h1v1h-1zM463,154h1v1h-1zM468,151h1v1h-1zM471,148h1v1h-1zM471,154h1v1h-1zM476,151h1v1h-1zM479,148h1v1h-1zM479,154h1v1h-1zM484,151h1v1h-1zM487,148h1v1h-1zM487,154h1v1h-1zM492,151h1v1h-1zM495,148h1v1h-1zM495,154h1v1h-1zM500,151h1v1h-1zM503,148h1v1h-1zM503,154h1v1h-1zM508,151h1v1h-1zM511,148h1v1h-1zM511,154h1v1h-1zM516,151h1v1h-1zM519,148h1v1h-1zM519,154h1v1h-1zM524,151h1v1h-1zM527,148h1v1h-1zM527,154h1v1h-1zM532,151h1v1h-1zM535,148h1v1h-1zM535,154h1v1h-1zM540,151h1v1h-1zM543,148h1v1h-1zM543,154h1v1h-1zM548,151h1v1h-1zM551,148h1v1h-1zM551,154h1v1h-1zM556,151h1v1h-1zM559,148h1v1h-1zM559,154h1v1h-1zM564,151h1v1h-1zM567,148h1v1h-1zM567,154h1v1h-1zM572,151h1v1h-1zM575,148h1v1h-1zM575,154h1v1h-1zM580,151h1v1h-1zM583,148h1v1h-1zM583,154h1v1h-1zM588,151h1v1h-1zM591,148h1v1h-1zM591,154h1v1h-1zM596,151h1v1h-1zM599,148h1v1h-1zM599,154h1v1h-1zM604,151h1v1h-1zM607,148h1v1h-1zM607,154h1v1h-1zM612,151h1v1h-1zM615,148h1v1h-1zM615,154h1v1h-1zM620,151h1v1h-1zM623,148h1v1h-1zM623,154h1v1h-1zM628,151h1v1h-1zM631,148h1v1h-1zM631,154h1v1h-1zM636,151h1v1h-1zM639,148h1v1h-1zM639,154h1v1h-1zM644,151h1v1h-1zM647,148h1v1h-1zM647,154h1v1h-1zM652,151h1v1h-1zM655,148h1v1h-1zM655,154h1v1h-1zM660,151h1v1h-1zM663,148h1v1h-1zM663,154h1v1h-1zM668,151h1v1h-1zM671,148h1v1h-1zM671,154h1v1h-1zM676,151h1v1h-1zM679,148h1v1h-1zM679,154h1v1h-1zM684,151h1v1h-1zM687,148h1v1h-1zM687,154h1v1h-1zM692,151h1v1h-1zM695,148h1v1h-1zM695,154h1v1h-1zM700,151h1v1h-1zM703,148h1v1h-1zM703,154h1v1h-1zM708,151h1v1h-1zM711,148h1v1h-1zM711,154h1v1h-1zM716,151h1v1h-1zM719,148h1v1h-1zM719,154h1v1h-1zM724,151h1v1h-1zM727,148h1v1h-1zM727,154h1v1h-1zM732,151h1v1h-1zM735,148h1v1h-1zM735,154h1v1h-1zM740,151h1v1h-1zM743,148h1v1h-1zM743,154h1v1h-1zM748,151h1v1h-1zM751,148h1v1h-1zM751,154h1v1h-1zM756,151h1v1h-1zM759,148h1v1h-1zM759,154h1v1h-1zM764,151h1v1h-1zM767,148h1v1h-1zM767,154h1v1h-1zM772,151h1v1h-1zM775,148h1v1h-1zM775,154h1v1h-1zM780,151h1v1h-1zM783,148h1v1h-1zM783,154h1v1h-1zM788,151h1v1h-1zM791,148h1v1h-1zM791,154h1v1h-1zM796,151h1v1h-1zM799,148h1v1h-1zM799,154h1v1h-1zM804,151h1v1h-1zM807,148h1v1h-1zM807,154h1v1h-1zM812,151h1v1h-1zM815,148h1v1h-1zM815,154h1v1h-1zM820,151h1v1h-1zM823,148h1v1h-1zM823,154h1v1h-1zM828,151h1v1h-1zM831,148h1v1h-1zM831,154h1v1h-1zM836,151h1v1h-1zM839,148h1v1h-1zM839,154h1v1h-1zM844,151h1v1h-1zM847,148h1v1h-1zM847,154h1v1h-1zM852,151h1v1h-1zM855,148h1v1h-1zM855,154h1v1h-1zM860,151h1v1h-1zM863,148h1v1h-1zM863,154h1v1h-1zM868,151h1v1h-1zM871,148h1v1h-1zM871,154h1v1h-1zM876,151h1v1h-1zM879,148h1v1h-1zM879,154h1v1h-1zM884,151h1v1h-1zM887,148h1v1h-1zM887,154h1v1h-1zM892,151h1v1h-1zM895,148h1v1h-1zM895,154h1v1h-1zM900,151h1v1h-1zM903,148h1v1h-1zM903,154h1v1h-1zM908,151h1v1h-1zM911,148h1v1h-1zM911,154h1v1h-1zM916,151h1v1h-1zM919,148h1v1h-1zM919,154h1v1h-1zM924,151h1v1h-1zM927,148h1v1h-1zM927,154h1v1h-1zM932,151h1v1h-1zM935,148h1v1h-1zM935,154h1v1h-1zM940,151h1v1h-1zM943,148h1v1h-1zM943,154h1v1h-1z" fill="#0c0c78" fill-opacity="0.5"/>
<text transform="matrix(1,0,0,1.03,0,172)" x="491 499 505 508 515 521 527 530 536 542 548 554 560 563 566 570 576 585 588 596 604 611" y="0" font-size="11" fill="#000" > ef eq genes from     </text>
<text transform="matrix(1,0,0,1.05,0,172)" x="491 499 505 508 515 521 527 530 536 542 548 554 560 563 566 570 576 585 588 596 604 611" y="0" font-size="11" fill="#000" >R  S              NCBI</text>
<text transform="matrix(1,0,0,1.06,0,187)" x="60 69 76 80 89 96 103 107 116 123 127 134 138 145" y="0" font-size="13" fill="#0c0c78" > ef eq  urated</text>
<text transform="matrix(1,0,0,1.1,0,187)" x="60 69 76 80 89 96 103 107 116 123 127 134 138 145" y="0" font-size="13" fill="#0c0c78" >R  S   C      </text>
<rect x="157" y="182" width="792" height="1" fill="#0c0c78"/>
<text transform="matrix(1,0,0,1.03,0,203)" x="445 452 458 464 466 468 474 480 483 485 491 497 503 506 509 516 522 528 534 540 546 552 558 564 567 569 575 578 585 591 593 599 605 608 610 613 615 621 624 631 635 638 640 646 648 654" y="0" font-size="11" fill="#000" > ublications   equences in  cientific  rticles</text>
<text transform="matrix(1,0,0,1.05,0,203)" x="445 452 458 464 466 468 474 480 483 485 491 497 503 506 509 516 522 528 534 540 546 552 558 564 567 569 575 578 585 591 593 599 605 608 610 613 615 621 624 631 635 638 640 646 648 654" y="0" font-size="11" fill="#000" >P           : S            S          A       </text>
<text transform="matrix(1,0,0,1.06,0,218)" x="87 96 103 110 117 124 131 138 145" y="0" font-size="13" fill="#000" > equences</text>
<text transform="matrix(1,0,0,1.1,0,218)" x="87 96 103 110 117 124 131 138 145" y="0" font-size="13" fill="#000" >S        </text>
<text transform="matrix(1,0,0,1.06,0,234)" x="118 127 136 145" y="0" font-size="13" fill="#000" >   s</text>
<text transform="matrix(1,0,0,1.1,0,234)" x="118 127 136 145" y="0" font-size="13" fill="#000" >SNP </text>
<text transform="matrix(1,0,0,1.06,0,251)" x="368 378 389 393 404 408 418 425 432 439 443 452 459 466 473 480 484 491 498 505 512 516 520 524 533 540 544 551 555 565 569 576 583 590 594 603 610 617 621 630 637 641 650 653 660 667 674 681 688 692 699 706 713 720 723 730" y="0" font-size="13" fill="#006400" >      ene  henotypes    ark  reen  an  e  isease causing</text>
<text transform="matrix(1,0,0,1.1,0,251)" x="368 378 389 393 404 408 418 425 432 439 443 452 459 466 473 480 484 491 498 505 512 516 520 524 533 540 544 551 555 565 569 576 583 590 594 603 610 617 621 630 637 641 650 653 660 667 674 681 688 692 699 706 713 720 723 730" y="0" font-size="13" fill="#006400" >OMIM G    P          - D    G     C   B  D      -       </text>
<text transform="matrix(1,0,0,1.06,0,265)" x="74 84 95 99 110 114 124 131 138 145" y="0" font-size="13" fill="#006400" >      enes</text>
<text transform="matrix(1,0,0,1.1,0,265)" x="74 84 95 99 110 114 124 131 138 145" y="0" font-size="13" fill="#006400" >OMIM G    </text>
<rect x="156" y="253" width="793" height="15" fill="#bebebe"/>
<text transform="matrix(1,0,0,1.03,0,281)" x="436 443 449 455 459 462 465 474 480 486 492 495 497 503 506 513 519 523 525 531 537 540 546 549 552 556 562 571 574 580 586 593 601 608 611 615 621 623 629 635 641 647 650 656 662" y="0" font-size="11" fill="#000" > hort  enetic  ariants from db    release    </text>
<text transform="matrix(1,0,0,1.05,0,281)" x="436 443 449 455 459 462 465 474 480 486 492 495 497 503 506 513 519 523 525 531 537 540 546 549 552 556 562 571 574 580 586 593 601 608 611 615 621 623 629 635 641 647 650 656 662" y="0" font-size="11" fill="#000" >S     G       V               SNP          55</text>
<path transform="matrix(0.005371,0,0,-0.005908,650,281)" d="M515,0L696,0L696,1409L566,1409Q470,1200 190,1130L190,1000Q400,1040 515,1150Z" fill="#000" shape-rendering="geometricPrecision"/>
<text transform="matrix(1,0,0,1.06,0,296)" x="26 35 42 53 64 71 78 82 89 96 105 114 123 127 134 141 148" y="0" font-size="13" fill="#000" > ommon db        </text>
<text transform="matrix(1,0,0,1.1,0,296)" x="26 35 42 53 64 71 78 82 89 96 105 114 123 127 134 141 148" y="0" font-size="13" fill="#000" >C        SNP( 55)</text>
<path transform="matrix(0.006348,0,0,-0.006982,127,296)" d="M515,0L696,0L696,1409L566,1409Q470,1200 190,1130L190,1000Q400,1040 515,1150Z" fill="#000" shape-rendering="geometricPrecision"/>
<text transform="matrix(1,0,0,1.06,0,313)" x="266 276 283 290 297 301 310 317 324 328 335 342 349 352 359 366 370 373 380 384 391 398 402 406 409 416 423 430 437 444 448 452 456 463 474 478 488 496 505 512 516 525 534 543 547 554 561 568 572 579 583 587 594 601 608 615 622 626 633 640 651 658 661 668 675 679 683 690 697 704 708 715 722 729 736 740 747 751 755 764 771 775 779 788 795 802 806 813 820 827 834" y="0" font-size="13" fill="#000" > ene  xpression in    tissues from    x     seq of       samples      donors       ug      </text>
<text transform="matrix(1,0,0,1.1,0,313)" x="266 276 283 290 297 301 310 317 324 328 335 342 349 352 359 366 370 373 380 384 391 398 402 406 409 416 423 430 437 444 448 452 456 463 474 478 488 496 505 512 516 525 534 543 547 554 561 568 572 579 583 587 594 601 608 615 622 626 633 640 651 658 661 668 675 679 683 690 697 704 708 715 722 729 736 740 747 751 755 764 771 775 779 788 795 802 806 813 820 827 834" y="0" font-size="13" fill="#000" >G    E             54              GTE  RNA-        7382        , 948        (V8, A   20 9)</text>
<path transform="matrix(0.006348,0,0,-0.006982,587,313)" d="M515,0L696,0L696,1409L566,1409Q470,1200 190,1130L190,1000Q400,1040 515,1150Z" fill="#000" shape-rendering="geometricPrecision"/>
<path transform="matrix(0.006348,0,0,-0.006982,820,313)" d="M515,0L696,0L696,1409L566,1409Q470,1200 190,1130L190,1000Q400,1040 515,1150Z" fill="#000" shape-rendering="geometricPrecision"/>
<text transform="matrix(1,0,0,1.1,0,341)" x="110 119 127 136 145" y="0" font-size="13" fill="#000" >BTBD9</text>
<rect x="156.5" y="316.5" width="377" height="36" fill="#fff" stroke="#f0f0f0" stroke-width="1"/>
<rect x="156" y="331" width="5" height="21" fill="#FFA54F"/>
<rect x="163" y="334" width="5" height="18" fill="#EE9A00"/>
<rect x="170" y="329" width="5" height="23" fill="#8FBC8F"/>
<rect x="177" y="328" width="5" height="24" fill="#8B1C62"/>
<rect x="184" y="328" width="5" height="24" fill="#EE6A50"/>
<rect x="191" y="324" width="5" height="28" fill="#FF0000"/>
<rect x="198" y="327" width="5" height="25" fill="#CDB79E"/>
<rect x="205" y="323" width="5" height="29" fill="#EEEE00"/>
<rect x="212" y="318" width="5" height="34" fill="#EEEE00"/>
<rect x="219" y="322" width="5" height="30" fill="#EEEE00"/>
<rect x="226" y="326" width="5" height="26" fill="#EEEE00"/>
<rect x="233" y="325" width="5" height="27" fill="#EEEE00"/>
<rect x="240" y="316" width="5" height="36" fill="#EEEE00"/>
<rect x="247" y="316" width="5" height="36" fill="#EEEE00"/>
<rect x="254" y="324" width="5" height="28" fill="#EEEE00"/>
<rect x="261" y="326" width="5" height="26" fill="#EEEE00"/>
<rect x="268" y="317" width="5" height="35" fill="#EEEE00"/>
<rect x="275" y="325" width="5" height="27" fill="#EEEE00"/>
<rect x="282" y="333" width="5" height="19" fill="#EEEE00"/>
<rect x="289" y="332" width="5" height="20" fill="#EEEE00"/>
<rect x="296" y="332" width="5" height="20" fill="#00CDCD"/>
<rect x="303" y="334" width="5" height="18" fill="#EE82EE"/>
<rect x="310" y="329" width="5" height="23" fill="#9AC0CD"/>
<rect x="317" y="327" width="5" height="25" fill="#EED5D2"/>
<rect x="324" y="325" width="5" height="27" fill="#EED5D2"/>
<rect x="331" y="329" width="5" height="23" fill="#CDB79E"/>
<rect x="338" y="330" width="5" height="22" fill="#EEC591"/>
<rect x="345" y="330" width="5" height="22" fill="#8B7355"/>
<rect x="352" y="328" width="5" height="24" fill="#8B7355"/>
<rect x="359" y="329" width="5" height="23" fill="#CDAA7D"/>
<rect x="366" y="327" width="5" height="25" fill="#EED5D2"/>
<rect x="373" y="330" width="5" height="22" fill="#B452CD"/>
<rect x="380" y="333" width="5" height="19" fill="#7A378B"/>
<rect x="387" y="334" width="5" height="18" fill="#CDB79E"/>
<rect x="394" y="331" width="5" height="21" fill="#CDB79E"/>
<rect x="401" y="342" width="5" height="10" fill="#CDB79E"/>
<rect x="408" y="323" width="5" height="29" fill="#9ACD32"/>
<rect x="415" y="331" width="5" height="21" fill="#CDB79E"/>
<rect x="422" y="335" width="5" height="17" fill="#7A67EE"/>
<rect x="429" y="328" width="5" height="24" fill="#FFD700"/>
<rect x="436" y="323" width="5" height="29" fill="#FFB6C1"/>
<rect x="443" y="339" width="5" height="13" fill="#CD9B1D"/>
<rect x="450" y="325" width="5" height="27" fill="#B4EEB4"/>
<rect x="457" y="328" width="5" height="24" fill="#D9D9D9"/>
<rect x="464" y="327" width="5" height="25" fill="#3A5FCD"/>
<rect x="471" y="325" width="5" height="27" fill="#1E90FF"/>
<rect x="478" y="328" width="5" height="24" fill="#CDB79E"/>
<rect x="485" y="330" width="5" height="22" fill="#CDB79E"/>
<rect x="492" y="333" width="5" height="19" fill="#FFD39B"/>
<rect x="499" y="324" width="5" height="28" fill="#A6A6A6"/>
<rect x="506" y="327" width="5" height="25" fill="#008B45"/>
<rect x="513" y="326" width="5" height="26" fill="#EED5D2"/>
<rect x="520" y="328" width="5" height="24" fill="#EED5D2"/>
<rect x="527" y="337" width="5" height="15" fill="#FF00FF"/>
<rect x="156" y="353" width="793" height="2" fill="#0c0c78"/>
<text transform="matrix(1,0,0,1.06,0,370)" x="281 290 297 306 313 320 329 336 340 351 358 362 369 373 377 387 391 395 402 409 413 421 428 435 442 449 453 462 469 476 480 484 493 500 504 507 514 521 525 534 541 548 555 558 565 569 576 580 587 591 600 603 610 621 628 635 639 646 650 654 661 668 672 679 683 690 697 700 703 707 710 713 720 727 734 738 742 746 753 764 768 777 786 795 805 814" y="0" font-size="13" fill="#000" >      c  ark   ften  ound  ear  ctive  egulatory  lements  on   cell lines from       </text>
<text transform="matrix(1,0,0,1.1,0,370)" x="281 290 297 306 313 320 329 336 340 351 358 362 369 373 377 387 391 395 402 409 413 421 428 435 442 449 453 462 469 476 480 484 493 500 504 507 514 521 525 534 541 548 555 558 565 569 576 580 587 591 600 603 610 621 628 635 639 646 650 654 661 668 672 679 683 690 697 700 703 707 710 713 720 727 734 738 742 746 753 764 768 777 786 795 805 814" y="0" font-size="13" fill="#000" >H3K27A  M    (O     F     N    A      R          E       )    7                 ENCODE</text>
<text transform="matrix(1,0,0,1.06,0,384)" x="13 20 27 34 41 45 52 59 63 72 79 88 95 102 111" y="0" font-size="13" fill="#000" > ayered       c</text>
<text transform="matrix(1,0,0,1.1,0,384)" x="13 20 27 34 41 45 52 59 63 72 79 88 95 102 111" y="0" font-size="13" fill="#000" >L       H3K27A </text>
<rect x="156" y="401" width="793" height="1" fill="#ff6a3c"/>
<text transform="matrix(1,0,0,1.06,0,416)" x="405 412 419 426 430 437 444 448 452 459 466 470 477 481 488 495 499 508 515 522 529 538 541 548 555 559 568 575 582 589 596 600 607 614 618 621 628 635 639 646 653 657 666 673 680 683 690" y="0" font-size="13" fill="#3c3c8c" >    vertebrates  asewise  onservation by  hylo </text>
<text transform="matrix(1,0,0,1.1,0,416)" x="405 412 419 426 430 437 444 448 452 459 466 470 477 481 488 495 499 508 515 522 529 538 541 548 555 559 568 575 582 589 596 600 607 614 618 621 628 635 639 646 653 657 666 673 680 683 690" y="0" font-size="13" fill="#3c3c8c" > 00             B        C               P    P</text>
<path transform="matrix(0.006348,0,0,-0.006982,405,416)" d="M515,0L696,0L696,1409L566,1409Q470,1200 190,1130L190,1000Q400,1040 515,1150Z" fill="#3c3c8c" shape-rendering="geometricPrecision"/>
<text transform="matrix(1,0,0,1.1,0,416)" x="116 123 127 134" y="0" font-size="13" fill="#3c3c8c" >4.88</text>
<rect x="145" y="416" width="8" height="1" fill="#3c3c8c"/>
<text transform="matrix(1,0,0,1.06,0,440)" x="13 20 27 34 38 47 54 58 62 66 70 79 86 93" y="0" font-size="13" fill="#3c3c8c" >     ert   ons</text>
<text transform="matrix(1,0,0,1.1,0,440)" x="13 20 27 34 38 47 54 58 62 66 70 79 86 93" y="0" font-size="13" fill="#3c3c8c" > 00 V   . C   </text>
<path transform="matrix(0.006348,0,0,-0.006982,13,440)" d="M515,0L696,0L696,1409L566,1409Q470,1200 190,1130L190,1000Q400,1040 515,1150Z" fill="#3c3c8c" shape-rendering="geometricPrecision"/>
<text transform="matrix(1,0,0,1.1,0,465)" x="119 123 130 134" y="0" font-size="13" fill="#8c3c3c" >-4.5</text>
<rect x="145" y="466" width="8" height="1" fill="#8c3c3c"/>
<rect x="165" y="441" width="38" height="1" fill="#90ee90" fill-opacity="0.6"/>
<rect x="181" y="441" width="6" height="3" fill="#00ee00"/>
<rect x="232" y="441" width="38" height="1" fill="#90ee90" fill-opacity="0.6"/>
<rect x="248" y="441" width="6" height="3" fill="#00ee00"/>
<rect x="298" y="441" width="38" height="1" fill="#90ee90" fill-opacity="0.6"/>
<rect x="314" y="441" width="6" height="3" fill="#00ee00"/>
<rect x="364" y="441" width="38" height="1" fill="#90ee90" fill-opacity="0.6"/>
<rect x="380" y="441" width="6" height="3" fill="#00ee00"/>
<rect x="430" y="444" width="38" height="1" fill="#90ee90" fill-opacity="0.6"/>
<rect x="446" y="444" width="6" height="5" fill="#00ee00"/>
<rect x="562" y="441" width="38" height="1" fill="#90ee90" fill-opacity="0.6"/>
<rect x="578" y="441" width="6" height="3" fill="#00ee00"/>
<rect x="628" y="441" width="38" height="1" fill="#90ee90" fill-opacity="0.6"/>
<rect x="644" y="441" width="6" height="3" fill="#00ee00"/>
<rect x="760" y="441" width="38" height="1" fill="#90ee90" fill-opacity="0.6"/>
<rect x="776" y="441" width="6" height="3" fill="#00ee00"/>
<rect x="892" y="441" width="38" height="1" fill="#90ee90" fill-opacity="0.6"/>
<rect x="908" y="441" width="6" height="3" fill="#00ee00"/>
<path d="M497,443.6 L505,443.1 L513,441.6 Q517,440.9 521,441.6 L529,443.1 L537,443.6" stroke="#ff0000" stroke-width="1.1" fill="none" shape-rendering="geometricPrecision"/>
<defs><linearGradient id="gb" x1="0" x2="1" y1="0" y2="0"><stop offset="0" stop-color="#9090ff"/><stop offset="0.1" stop-color="#4444ff"/><stop offset="0.2" stop-color="#8080ff"/><stop offset="0.3" stop-color="#b0b0ff"/><stop offset="0.5" stop-color="#a8a8ff"/><stop offset="0.56" stop-color="#8484ff"/><stop offset="0.92" stop-color="#6060ff"/><stop offset="1" stop-color="#9090ff"/></linearGradient><linearGradient id="go" x1="0" x2="1" y1="0" y2="0"><stop offset="0" stop-color="#d0d070"/><stop offset="0.1" stop-color="#bcb83c"/><stop offset="0.25" stop-color="#e0dca8"/><stop offset="0.5" stop-color="#ebe8c8"/><stop offset="0.72" stop-color="#e0dca8"/><stop offset="0.82" stop-color="#c8c460"/><stop offset="1" stop-color="#f4f2dc"/></linearGradient></defs>
<path d="M697,444.5 Q702,443.8 706,444.1 L719,444.1 Q730,443.9 739,444.5 Q730,445.1 719,444.9 L706,444.9 Q702,445.2 697,444.5Z" fill="url(#gb)" shape-rendering="geometricPrecision"/>
<path d="M829,444 L836,444 Q850,444.3 860,444.2 Q866,444.6 869,445 Q866,445.6 860,445.8 Q850,445.7 836,446 L829,446Z" fill="url(#go)" shape-rendering="geometricPrecision"/>
<text transform="matrix(1,0,0,1.06,0,482)" x="445 456 463 466 470 473 480 484 493 496 499 506 513 524 531 538 542 549 553 560 564 568 575 582 589 593 602 609 613 617 624 631 635 642 646 653" y="0" font-size="13" fill="#0c0c78" > ultiz  lignments of      ertebrates</text>
<text transform="matrix(1,0,0,1.1,0,482)" x="445 456 463 466 470 473 480 484 493 496 499 506 513 524 531 538 542 549 553 560 564 568 575 582 589 593 602 609 613 617 624 631 635 642 646 653" y="0" font-size="13" fill="#0c0c78" >M      A              00 V          </text>
<path transform="matrix(0.006348,0,0,-0.006982,568,482)" d="M515,0L696,0L696,1409L566,1409Q470,1200 190,1130L190,1000Q400,1040 515,1150Z" fill="#0c0c78" shape-rendering="geometricPrecision"/>
<text transform="matrix(1,0,0,1.06,0,496)" x="121 131 138 145" y="0" font-size="13" fill="#e48a12" > aps</text>
<text transform="matrix(1,0,0,1.1,0,496)" x="121 131 138 145" y="0" font-size="13" fill="#e48a12" >G   </text>
<text transform="matrix(1,0,0,1.06,0,511)" x="111 120 127 138 145" y="0" font-size="13" fill="#0c0c78" > uman</text>
<text transform="matrix(1,0,0,1.1,0,511)" x="111 120 127 138 145" y="0" font-size="13" fill="#0c0c78" >H    </text>
<text transform="matrix(1,0,0,1.06,0,526)" x="108 117 124 131 138 145" y="0" font-size="13" fill="#0c0c78" > hesus</text>
<text transform="matrix(1,0,0,1.1,0,526)" x="108 117 124 131 138 145" y="0" font-size="13" fill="#0c0c78" >R     </text>
<text transform="matrix(1,0,0,1.06,0,541)" x="113 124 131 138 145" y="0" font-size="13" fill="#006400" > ouse</text>
<text transform="matrix(1,0,0,1.1,0,541)" x="113 124 131 138 145" y="0" font-size="13" fill="#006400" >M    </text>
<text transform="matrix(1,0,0,1.06,0,556)" x="129 138 145" y="0" font-size="13" fill="#0c0c78" > og</text>
<text transform="matrix(1,0,0,1.1,0,556)" x="129 138 145" y="0" font-size="13" fill="#0c0c78" >D  </text>
<text transform="matrix(1,0,0,1.06,0,571)" x="101 110 113 120 127 134 141 148" y="0" font-size="13" fill="#006400" > lephant</text>
<text transform="matrix(1,0,0,1.1,0,571)" x="101 110 113 120 127 134 141 148" y="0" font-size="13" fill="#006400" >E       </text>
<text transform="matrix(1,0,0,1.06,0,586)" x="105 114 121 124 131 138 145" y="0" font-size="13" fill="#006400" > hicken</text>
<text transform="matrix(1,0,0,1.1,0,586)" x="105 114 121 124 131 138 145" y="0" font-size="13" fill="#006400" >C      </text>
<text transform="matrix(1,0,0,1.06,0,601)" x="84 93 100 104 108 115 122 125 132 139 142 145" y="0" font-size="13" fill="#0c0c78" >  tropicalis</text>
<text transform="matrix(1,0,0,1.1,0,601)" x="84 93 100 104 108 115 122 125 132 139 142 145" y="0" font-size="13" fill="#0c0c78" >X_          </text>
<text transform="matrix(1,0,0,1.06,0,616)" x="98 106 113 120 124 131 135 138 145" y="0" font-size="13" fill="#006400" > ebrafish</text>
<text transform="matrix(1,0,0,1.1,0,616)" x="98 106 113 120 124 131 135 138 145" y="0" font-size="13" fill="#006400" >Z        </text>
<text transform="matrix(1,0,0,1.1,0,511)" x="183" y="0" font-size="13" fill="#202060" >T</text>
<text transform="matrix(1,0,0,1.1,0,526)" x="183" y="0" font-size="13" fill="#202060" >T</text>
<path d="M184,536h6v1h-6zM184,539h6v1h-6zM184,581h6v1h-6zM184,584h6v1h-6zM186,552h3v1h-3zM186,567h3v1h-3z" fill="#5c5c9c"/>
<text transform="matrix(1,0,0,1.1,0,511)" x="249" y="0" font-size="13" fill="#202060" >T</text>
<text transform="matrix(1,0,0,1.1,0,526)" x="249" y="0" font-size="13" fill="#202060" >T</text>
<path d="M250,536h6v1h-6zM250,539h6v1h-6zM250,581h6v1h-6zM250,584h6v1h-6zM252,552h3v1h-3zM252,567h3v1h-3z" fill="#5c5c9c"/>
<text transform="matrix(1,0,0,1.1,0,511)" x="315" y="0" font-size="13" fill="#202060" >T</text>
<text transform="matrix(1,0,0,1.1,0,526)" x="315" y="0" font-size="13" fill="#202060" >T</text>
<path d="M316,536h6v1h-6zM316,539h6v1h-6zM316,581h6v1h-6zM316,584h6v1h-6zM318,552h3v1h-3zM318,567h3v1h-3z" fill="#5c5c9c"/>
<text transform="matrix(1,0,0,1.1,0,511)" x="381" y="0" font-size="13" fill="#202060" >T</text>
<text transform="matrix(1,0,0,1.1,0,526)" x="381" y="0" font-size="13" fill="#202060" >T</text>
<path d="M382,536h6v1h-6zM382,539h6v1h-6zM382,581h6v1h-6zM382,584h6v1h-6zM384,552h3v1h-3zM384,567h3v1h-3z" fill="#5c5c9c"/>
<text transform="matrix(1,0,0,1.1,0,511)" x="447" y="0" font-size="13" fill="#202060" >T</text>
<text transform="matrix(1,0,0,1.1,0,526)" x="447" y="0" font-size="13" fill="#202060" >T</text>
<path d="M448,536h6v1h-6zM448,539h6v1h-6zM448,581h6v1h-6zM448,584h6v1h-6zM450,552h3v1h-3zM450,567h3v1h-3z" fill="#5c5c9c"/>
<text transform="matrix(1,0,0,1.1,0,511)" x="513" y="0" font-size="13" fill="#202060" >A</text>
<text transform="matrix(1,0,0,1.1,0,526)" x="513" y="0" font-size="13" fill="#202060" >A</text>
<path d="M514,536h6v1h-6zM514,539h6v1h-6zM514,581h6v1h-6zM514,584h6v1h-6zM516,552h3v1h-3zM516,567h3v1h-3z" fill="#5c5c9c"/>
<text transform="matrix(1,0,0,1.1,0,511)" x="579" y="0" font-size="13" fill="#202060" >T</text>
<text transform="matrix(1,0,0,1.1,0,526)" x="579" y="0" font-size="13" fill="#202060" >T</text>
<path d="M580,536h6v1h-6zM580,539h6v1h-6zM580,581h6v1h-6zM580,584h6v1h-6zM582,552h3v1h-3zM582,567h3v1h-3z" fill="#5c5c9c"/>
<text transform="matrix(1,0,0,1.1,0,511)" x="645" y="0" font-size="13" fill="#202060" >T</text>
<text transform="matrix(1,0,0,1.1,0,526)" x="645" y="0" font-size="13" fill="#202060" >T</text>
<path d="M646,536h6v1h-6zM646,539h6v1h-6zM646,581h6v1h-6zM646,584h6v1h-6zM648,552h3v1h-3zM648,567h3v1h-3z" fill="#5c5c9c"/>
<text transform="matrix(1,0,0,1.1,0,511)" x="710" y="0" font-size="13" fill="#202060" >G</text>
<text transform="matrix(1,0,0,1.1,0,526)" x="710" y="0" font-size="13" fill="#202060" >G</text>
<path d="M712,536h6v1h-6zM712,539h6v1h-6zM712,581h6v1h-6zM712,584h6v1h-6zM714,552h3v1h-3zM714,567h3v1h-3z" fill="#5c5c9c"/>
<text transform="matrix(1,0,0,1.1,0,511)" x="777" y="0" font-size="13" fill="#202060" >T</text>
<text transform="matrix(1,0,0,1.1,0,526)" x="777" y="0" font-size="13" fill="#202060" >T</text>
<path d="M778,536h6v1h-6zM778,539h6v1h-6zM778,581h6v1h-6zM778,584h6v1h-6zM780,552h3v1h-3zM780,567h3v1h-3z" fill="#5c5c9c"/>
<text transform="matrix(1,0,0,1.1,0,511)" x="843" y="0" font-size="13" fill="#202060" >C</text>
<text transform="matrix(1,0,0,1.1,0,526)" x="843" y="0" font-size="13" fill="#202060" >C</text>
<path d="M845,536h6v1h-6zM845,539h6v1h-6zM845,581h6v1h-6zM845,584h6v1h-6zM847,552h3v1h-3zM847,567h3v1h-3z" fill="#5c5c9c"/>
<text transform="matrix(1,0,0,1.1,0,511)" x="910" y="0" font-size="13" fill="#202060" >T</text>
<text transform="matrix(1,0,0,1.1,0,526)" x="910" y="0" font-size="13" fill="#202060" >T</text>
<path d="M911,536h6v1h-6zM911,539h6v1h-6zM911,581h6v1h-6zM911,584h6v1h-6zM913,552h3v1h-3zM913,567h3v1h-3z" fill="#5c5c9c"/>
<text transform="matrix(1,0,0,1.06,0,632)" x="441 450 457 464 471 478 482 485 492 499 503 512 515 522 533 540 547 551 558 562 569 576 580 589 596 603 610 617 621 632 639 646 653 660" y="0" font-size="13" fill="#000" > epeating  lements by  epeat asker</text>
<text transform="matrix(1,0,0,1.1,0,632)" x="441 450 457 464 471 478 482 485 492 499 503 512 515 522 533 540 547 551 558 562 569 576 580 589 596 603 610 617 621 632 639 646 653 660" y="0" font-size="13" fill="#000" >R         E           R     M     </text>
<text transform="matrix(1,0,0,1.06,0,646)" x="68 77 84 91 98 105 109 120 127 134 141 148" y="0" font-size="13" fill="#000" > epeat asker</text>
<text transform="matrix(1,0,0,1.1,0,646)" x="68 77 84 91 98 105 109 120 127 134 141 148" y="0" font-size="13" fill="#000" >R     M     </text>
<rect x="156" y="634" width="793" height="15" fill="#000"/>
</svg>
</body></html>
